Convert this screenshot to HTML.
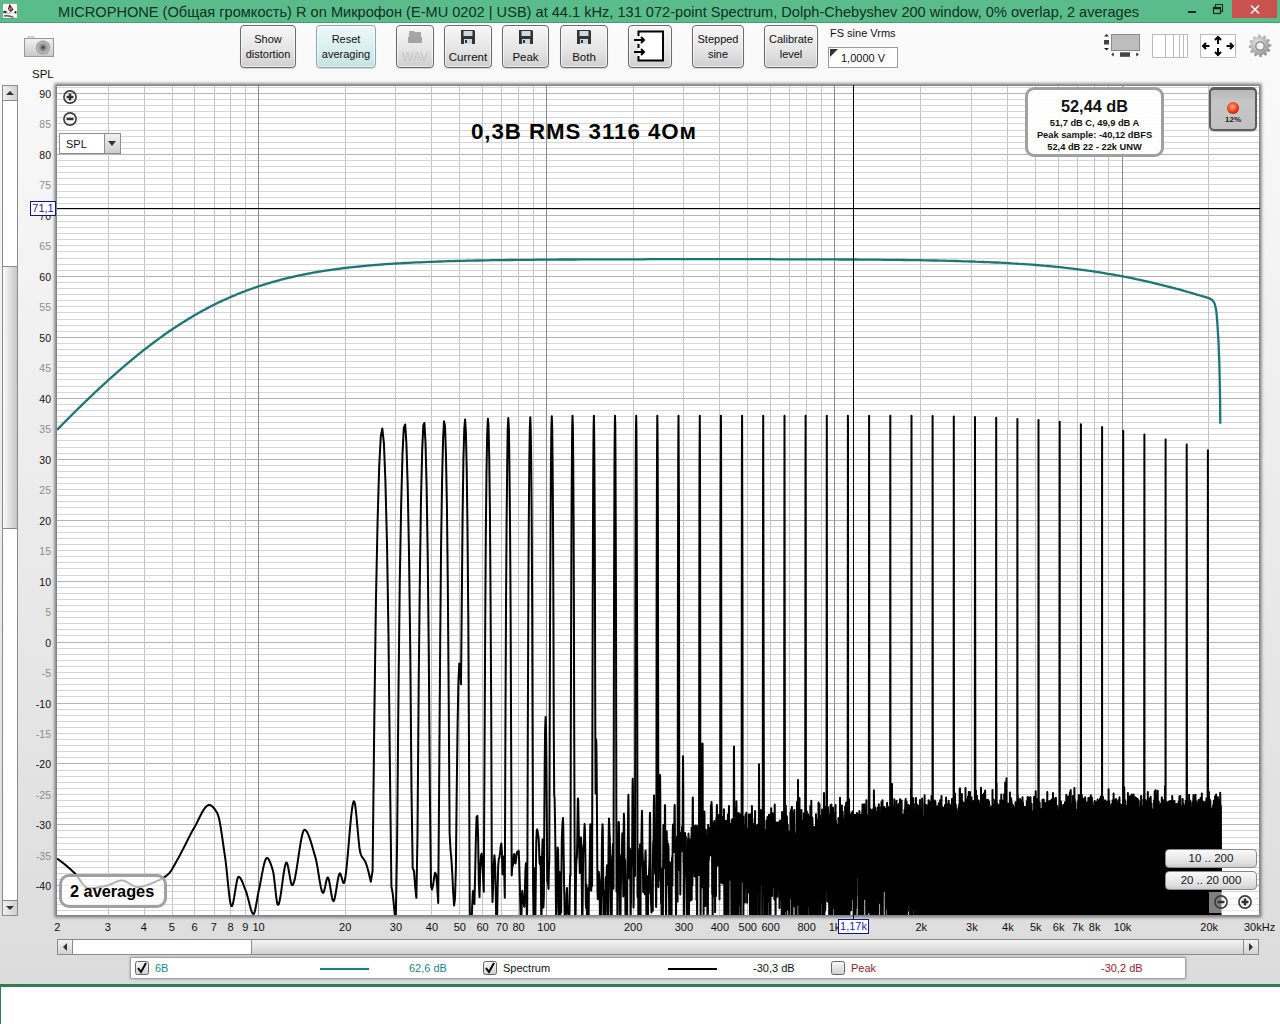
<!DOCTYPE html><html><head><meta charset="utf-8"><style>
*{margin:0;padding:0;box-sizing:border-box}
html,body{width:1280px;height:1024px;overflow:hidden;background:#fff;font-family:"Liberation Sans",sans-serif;}
.abs{position:absolute}
#win{position:absolute;left:0;top:0;width:1280px;height:987px;background:linear-gradient(#fbfbfb 22px,#f5f5f5 200px,#dcdcdc 984px);}
#title{position:absolute;left:0;top:0;width:1280px;height:23px;background:#5bbc8b;}
#title .t{position:absolute;left:58px;top:4px;font-size:14.6px;color:#10301f;white-space:nowrap;letter-spacing:0px}
.btn{position:absolute;top:25px;height:43px;border:1px solid #6a6a6a;border-radius:4px;background:linear-gradient(#f7f7f7,#e4e4e4 60%,#cfcfcf);box-shadow:inset 0 0 0 1px rgba(255,255,255,.6),0 1px 1px rgba(0,0,0,.15);font-size:11px;color:#111;text-align:center;line-height:15px}
.btn.dis{color:#c4c4c4}
.yl{position:absolute;right:1229px;font-size:10.5px;line-height:12px;text-align:right;white-space:nowrap}
.xl{position:absolute;top:921px;font-size:11px;line-height:12px;white-space:nowrap;color:#111}
</style></head><body><div id="win"><div id="title"><svg class="abs" style="left:0;top:0" width="22" height="22" viewBox="0 0 22 22"><rect x="2.5" y="3.3" width="15" height="15" fill="#f4f6f8" stroke="#2f6a4a" stroke-width=".4"/><path d="M9.5 4 L13.5 9.5 L10.5 12 L8 9Z" fill="#2a1a1a"/><circle cx="10.6" cy="8.8" r="1.8" fill="#e05050"/><ellipse cx="5" cy="12" rx="2" ry="1.3" fill="#333a44"/><ellipse cx="15.5" cy="12.3" rx="1" ry="1.2" fill="#222"/><path d="M4 16 Q9 15 13.5 17.5" stroke="#555" stroke-width="1.4" fill="none"/><path d="M6 13 Q9 14 12 12" stroke="#bbb" stroke-width="1.5" fill="none"/></svg><div class="t">MICROPHONE (Общая громкость) R on Микрофон (E-MU 0202 | USB) at 44.1 kHz, 131 072-point Spectrum, Dolph-Chebyshev 200 window, 0% overlap, 2 averages</div><div class="abs" style="left:1188px;top:11px;width:8px;height:2px;background:#0d2a1a"></div><svg class="abs" style="left:1212px;top:3px" width="12" height="12"><rect x="1.5" y="4.5" width="7" height="6" fill="none" stroke="#0d2a1a" stroke-width="1.2"/><path d="M1.5 5.5 H8.5" stroke="#0d2a1a" stroke-width="1.5"/><path d="M3.5 4 V1.5 H10.5 V8.5 H9" fill="none" stroke="#0d2a1a" stroke-width="1.1"/></svg><div class="abs" style="left:1232px;top:0;width:45px;height:18px;background:#c9514f"></div><svg class="abs" style="left:1250px;top:5px" width="10" height="9"><path d="M1 0.5 L9 8.5 M9 0.5 L1 8.5" stroke="#fff" stroke-width="1.5"/></svg><div class="abs" style="left:0;top:22px;width:1280px;height:1px;background:#4f9a72"></div></div><div class="btn" style="left:240px;width:56px;"><div style="padding-top:6px">Show<br>distortion</div></div><div class="btn" style="left:316px;width:60px;background:linear-gradient(#eef8f8,#d8eeee 60%,#c6e2e2);border-color:#8aa"><div style="padding-top:6px">Reset<br>averaging</div></div><div class="btn dis" style="left:396px;width:38px;"><svg width="16" height="14" viewBox="0 0 16 14" style="display:block;margin:4px auto 0"><path d="M2 1 H7 L8 2 H14 V7 H2Z" fill="#a8a8a8"/><path d="M1 7 H15 V12 Q15 13 14 13 H2 Q1 13 1 12Z" fill="#a4a4a4"/></svg><div style="padding-top:6px;font-size:12px">WAV</div></div><div class="btn" style="left:444px;width:48px;"><svg width="16" height="16" viewBox="0 0 16 16" style="display:block;margin:3px auto 0"><path d="M1 1 H14 L15 2 V15 H1Z" fill="#333"/><rect x="3.5" y="2" width="9" height="5" fill="#cfd8e0"/><rect x="4" y="10" width="8" height="5" fill="#cfd8e0"/><rect x="5" y="11" width="2" height="3" fill="#333"/></svg><div style="padding-top:5px;font-size:11.5px">Current</div></div><div class="btn" style="left:502px;width:47px;"><svg width="16" height="16" viewBox="0 0 16 16" style="display:block;margin:3px auto 0"><path d="M1 1 H14 L15 2 V15 H1Z" fill="#333"/><rect x="3.5" y="2" width="9" height="5" fill="#cfd8e0"/><rect x="4" y="10" width="8" height="5" fill="#cfd8e0"/><rect x="5" y="11" width="2" height="3" fill="#333"/></svg><div style="padding-top:5px;font-size:11.5px">Peak</div></div><div class="btn" style="left:560px;width:48px;"><svg width="16" height="16" viewBox="0 0 16 16" style="display:block;margin:3px auto 0"><path d="M1 1 H14 L15 2 V15 H1Z" fill="#333"/><rect x="3.5" y="2" width="9" height="5" fill="#cfd8e0"/><rect x="4" y="10" width="8" height="5" fill="#cfd8e0"/><rect x="5" y="11" width="2" height="3" fill="#333"/></svg><div style="padding-top:5px;font-size:11.5px">Both</div></div><div class="btn" style="left:628px;width:44px;"><svg width="42" height="41" viewBox="0 0 42 41" style="position:absolute;left:0;top:0"><rect x="9.5" y="5.5" width="24.5" height="29" fill="#fff"/><path d="M9.5 10 V5.5 H34 V34.5 H9.5 V30 M9.5 18 V22" fill="none" stroke="#000" stroke-width="2"/><path d="M5 14 H15 M12 11 L15 14 L12 17 M5 26 H15 M12 23 L15 26 L12 29" stroke="#000" stroke-width="2" fill="none"/></svg></div><div class="btn" style="left:692px;width:52px;"><div style="padding-top:6px">Stepped<br>sine</div></div><div class="btn" style="left:764px;width:54px;"><div style="padding-top:6px">Calibrate<br>level</div></div><div class="abs" style="left:830px;top:27px;font-size:11px;color:#111">FS sine Vrms</div><div class="abs" style="left:828px;top:47px;width:70px;height:21px;background:#fff;border:1px solid #9a9a9a;font-size:11px;line-height:21px;padding-left:12px;color:#111">1,0000 V</div><div class="abs" style="left:830px;top:49px;width:0;height:0;border-top:8px solid #333;border-right:8px solid transparent"></div><svg class="abs" style="left:1100px;top:30px" width="42" height="30" viewBox="0 0 42 30">
<rect x="11.5" y="4.5" width="28" height="16" fill="#bdbdbd" stroke="#8a8a8a"/>
<path d="M4 6.5 L6.5 4 L9 6.5Z M4 18 L6.5 20.5 L9 18Z" fill="#222"/>
<rect x="4" y="10" width="5" height="4.5" fill="#444"/>
<path d="M13.7 22.5 L11.2 24.5 L13.7 26.5Z M36.3 22.5 L38.8 24.5 L36.3 26.5Z" fill="#222"/>
<rect x="20" y="22.3" width="10" height="4.5" fill="#444"/>
</svg><svg class="abs" style="left:1152px;top:34px" width="37" height="24" viewBox="0 0 37 24">
<rect x="0.5" y="0.5" width="35" height="23" fill="#fff" stroke="#bbb"/>
<path d="M13.5 0 V24 M21.5 0 V24 M27.5 0 V24 M31.5 0 V24" stroke="#bbb"/>
</svg><svg class="abs" style="left:1200px;top:34px" width="37" height="24" viewBox="0 0 37 24">
<rect x="0.5" y="0.5" width="35" height="23" fill="#fff" stroke="#bbb"/>
<path d="M18 3 V10 M18 14 V21 M3 12 H9.5 M26.5 12 H33" stroke="#000" stroke-width="2"/>
<path d="M15 6 L18 3 L21 6 M15 18 L18 21 L21 18 M6 9 L3 12 L6 15 M30 9 L33 12 L30 15" stroke="#000" stroke-width="2" fill="none"/>
</svg><svg class="abs" style="left:1248px;top:34px" width="24" height="24" viewBox="0 0 24 24">
<defs><radialGradient id="gg" cx="40%" cy="35%" r="70%"><stop offset="0" stop-color="#e8e8e8"/><stop offset="1" stop-color="#8a8a8a"/></radialGradient></defs>
<polygon points="22.91,10.57 23.00,12.01 20.53,13.13 20.30,14.23 22.16,16.22 21.52,17.51 18.82,17.24 18.08,18.09 18.69,20.73 17.49,21.53 15.28,19.95 14.22,20.31 13.43,22.91 11.99,23.00 10.87,20.53 9.77,20.30 7.78,22.16 6.49,21.52 6.76,18.82 5.91,18.08 3.27,18.69 2.47,17.49 4.05,15.28 3.69,14.22 1.09,13.43 1.00,11.99 3.47,10.87 3.70,9.77 1.84,7.78 2.48,6.49 5.18,6.76 5.92,5.91 5.31,3.27 6.51,2.47 8.72,4.05 9.78,3.69 10.57,1.09 12.01,1.00 13.13,3.47 14.23,3.70 16.22,1.84 17.51,2.48 17.24,5.18 18.09,5.92 20.73,5.31 21.53,6.51 19.95,8.72 20.31,9.78" fill="url(#gg)" stroke="#9a9a9a" stroke-width="0.5"/>
<circle cx="12" cy="12" r="4.2" fill="#f4f4f4" stroke="#888" stroke-width="1.2"/>
</svg><svg class="abs" style="left:24px;top:36px" width="30" height="21" viewBox="0 0 30 21">
<defs><linearGradient id="cg" x1="0" y1="0" x2="0" y2="1"><stop offset="0" stop-color="#f2f2f2"/><stop offset="1" stop-color="#c8c8c8"/></linearGradient>
<radialGradient id="lg" cx="50%" cy="50%" r="50%"><stop offset="0" stop-color="#333"/><stop offset=".35" stop-color="#888"/><stop offset=".8" stop-color="#bbb"/><stop offset="1" stop-color="#888"/></radialGradient></defs>
<rect x="4" y="0.5" width="6" height="2" fill="#ddd" stroke="#aaa" stroke-width=".5"/>
<rect x="0.5" y="2.5" width="29" height="18" fill="url(#cg)" stroke="#999"/>
<circle cx="19" cy="11.5" r="7" fill="url(#lg)"/>
</svg><div class="abs" style="left:32px;top:68px;font-size:11.5px;color:#111">SPL</div><div class="abs" style="left:2px;top:85px;width:16px;height:831px;background:#fff;border:1px solid #8a8a8a"></div><div class="abs" style="left:2px;top:85px;width:16px;height:16px;background:linear-gradient(90deg,#f0f0f0,#d0d0d0);border:1px solid #8a8a8a"></div><div class="abs" style="left:6px;top:91px;width:0;height:0;border-left:4px solid transparent;border-right:4px solid transparent;border-bottom:4px solid #333"></div><div class="abs" style="left:2px;top:900px;width:16px;height:16px;background:linear-gradient(90deg,#f0f0f0,#d0d0d0);border:1px solid #8a8a8a"></div><div class="abs" style="left:6px;top:906px;width:0;height:0;border-left:4px solid transparent;border-right:4px solid transparent;border-top:4px solid #333"></div><div class="abs" style="left:2px;top:266px;width:16px;height:263px;background:linear-gradient(90deg,#fafafa,#c6c6c6);border:1px solid #8a8a8a"></div><div class="yl" style="top:88px;color:#111">90</div><div class="yl" style="top:118px;color:#8c8c8c">85</div><div class="yl" style="top:149px;color:#111">80</div><div class="yl" style="top:179px;color:#8c8c8c">75</div><div class="yl" style="top:210px;color:#111">70</div><div class="yl" style="top:240px;color:#8c8c8c">65</div><div class="yl" style="top:271px;color:#111">60</div><div class="yl" style="top:301px;color:#8c8c8c">55</div><div class="yl" style="top:332px;color:#111">50</div><div class="yl" style="top:362px;color:#8c8c8c">45</div><div class="yl" style="top:393px;color:#111">40</div><div class="yl" style="top:423px;color:#8c8c8c">35</div><div class="yl" style="top:454px;color:#111">30</div><div class="yl" style="top:484px;color:#8c8c8c">25</div><div class="yl" style="top:515px;color:#111">20</div><div class="yl" style="top:545px;color:#8c8c8c">15</div><div class="yl" style="top:576px;color:#111">10</div><div class="yl" style="top:606px;color:#8c8c8c">5</div><div class="yl" style="top:637px;color:#111">0</div><div class="yl" style="top:667px;color:#8c8c8c">-5</div><div class="yl" style="top:698px;color:#111">-10</div><div class="yl" style="top:728px;color:#8c8c8c">-15</div><div class="yl" style="top:758px;color:#111">-20</div><div class="yl" style="top:789px;color:#8c8c8c">-25</div><div class="yl" style="top:819px;color:#111">-30</div><div class="yl" style="top:850px;color:#8c8c8c">-35</div><div class="yl" style="top:880px;color:#111">-40</div><div class="xl" style="left:7.2px;width:100px;text-align:center">2</div><div class="xl" style="left:57.9px;width:100px;text-align:center">3</div><div class="xl" style="left:93.9px;width:100px;text-align:center">4</div><div class="xl" style="left:121.8px;width:100px;text-align:center">5</div><div class="xl" style="left:144.6px;width:100px;text-align:center">6</div><div class="xl" style="left:163.9px;width:100px;text-align:center">7</div><div class="xl" style="left:180.6px;width:100px;text-align:center">8</div><div class="xl" style="left:195.3px;width:100px;text-align:center">9</div><div class="xl" style="left:208.5px;width:100px;text-align:center">10</div><div class="xl" style="left:295.2px;width:100px;text-align:center">20</div><div class="xl" style="left:345.9px;width:100px;text-align:center">30</div><div class="xl" style="left:381.9px;width:100px;text-align:center">40</div><div class="xl" style="left:409.8px;width:100px;text-align:center">50</div><div class="xl" style="left:432.6px;width:100px;text-align:center">60</div><div class="xl" style="left:451.9px;width:100px;text-align:center">70</div><div class="xl" style="left:468.6px;width:100px;text-align:center">80</div><div class="xl" style="left:496.5px;width:100px;text-align:center">100</div><div class="xl" style="left:583.2px;width:100px;text-align:center">200</div><div class="xl" style="left:633.9px;width:100px;text-align:center">300</div><div class="xl" style="left:669.9px;width:100px;text-align:center">400</div><div class="xl" style="left:697.8px;width:100px;text-align:center">500</div><div class="xl" style="left:720.6px;width:100px;text-align:center">600</div><div class="xl" style="left:756.6px;width:100px;text-align:center">800</div><div class="xl" style="left:784.5px;width:100px;text-align:center">1k</div><div class="xl" style="left:871.2px;width:100px;text-align:center">2k</div><div class="xl" style="left:921.9px;width:100px;text-align:center">3k</div><div class="xl" style="left:957.9px;width:100px;text-align:center">4k</div><div class="xl" style="left:985.8px;width:100px;text-align:center">5k</div><div class="xl" style="left:1008.6px;width:100px;text-align:center">6k</div><div class="xl" style="left:1027.9px;width:100px;text-align:center">7k</div><div class="xl" style="left:1044.6px;width:100px;text-align:center">8k</div><div class="xl" style="left:1072.5px;width:100px;text-align:center">10k</div><div class="xl" style="left:1159.2px;width:100px;text-align:center">20k</div><div class="xl" style="left:1244px">30kHz</div></div><svg class="abs" style="left:0;top:0" width="1280" height="1024" viewBox="0 0 1280 1024"><defs><filter id="sh" x="-5%" y="-5%" width="110%" height="110%"><feGaussianBlur stdDeviation="1.6"/></filter><clipPath id="pc"><rect x="57" y="86" width="1202" height="829"/></clipPath></defs><rect x="54.5" y="83.5" width="1207" height="834" fill="#7a7a7a" filter="url(#sh)"/><rect x="57" y="86" width="1202" height="829" fill="#fff"/><path d="M57 87.5H1259" stroke="#d6d6d6"/><path d="M57 93.5H1259" stroke="#b4b4b4"/><path d="M57 99.5H1259" stroke="#d6d6d6"/><path d="M57 105.5H1259" stroke="#d6d6d6"/><path d="M57 111.5H1259" stroke="#d6d6d6"/><path d="M57 117.5H1259" stroke="#d6d6d6"/><path d="M57 123.5H1259" stroke="#d6d6d6"/><path d="M57 130.5H1259" stroke="#d6d6d6"/><path d="M57 136.5H1259" stroke="#d6d6d6"/><path d="M57 142.5H1259" stroke="#d6d6d6"/><path d="M57 148.5H1259" stroke="#d6d6d6"/><path d="M57 154.5H1259" stroke="#b4b4b4"/><path d="M57 160.5H1259" stroke="#d6d6d6"/><path d="M57 166.5H1259" stroke="#d6d6d6"/><path d="M57 172.5H1259" stroke="#d6d6d6"/><path d="M57 178.5H1259" stroke="#d6d6d6"/><path d="M57 184.5H1259" stroke="#d6d6d6"/><path d="M57 191.5H1259" stroke="#d6d6d6"/><path d="M57 197.5H1259" stroke="#d6d6d6"/><path d="M57 203.5H1259" stroke="#d6d6d6"/><path d="M57 209.5H1259" stroke="#d6d6d6"/><path d="M57 215.5H1259" stroke="#b4b4b4"/><path d="M57 221.5H1259" stroke="#d6d6d6"/><path d="M57 227.5H1259" stroke="#d6d6d6"/><path d="M57 233.5H1259" stroke="#d6d6d6"/><path d="M57 239.5H1259" stroke="#d6d6d6"/><path d="M57 245.5H1259" stroke="#d6d6d6"/><path d="M57 251.5H1259" stroke="#d6d6d6"/><path d="M57 258.5H1259" stroke="#d6d6d6"/><path d="M57 264.5H1259" stroke="#d6d6d6"/><path d="M57 270.5H1259" stroke="#d6d6d6"/><path d="M57 276.5H1259" stroke="#b4b4b4"/><path d="M57 282.5H1259" stroke="#d6d6d6"/><path d="M57 288.5H1259" stroke="#d6d6d6"/><path d="M57 294.5H1259" stroke="#d6d6d6"/><path d="M57 300.5H1259" stroke="#d6d6d6"/><path d="M57 306.5H1259" stroke="#d6d6d6"/><path d="M57 312.5H1259" stroke="#d6d6d6"/><path d="M57 319.5H1259" stroke="#d6d6d6"/><path d="M57 325.5H1259" stroke="#d6d6d6"/><path d="M57 331.5H1259" stroke="#d6d6d6"/><path d="M57 337.5H1259" stroke="#b4b4b4"/><path d="M57 343.5H1259" stroke="#d6d6d6"/><path d="M57 349.5H1259" stroke="#d6d6d6"/><path d="M57 355.5H1259" stroke="#d6d6d6"/><path d="M57 361.5H1259" stroke="#d6d6d6"/><path d="M57 367.5H1259" stroke="#d6d6d6"/><path d="M57 373.5H1259" stroke="#d6d6d6"/><path d="M57 379.5H1259" stroke="#d6d6d6"/><path d="M57 386.5H1259" stroke="#d6d6d6"/><path d="M57 392.5H1259" stroke="#d6d6d6"/><path d="M57 398.5H1259" stroke="#b4b4b4"/><path d="M57 404.5H1259" stroke="#d6d6d6"/><path d="M57 410.5H1259" stroke="#d6d6d6"/><path d="M57 416.5H1259" stroke="#d6d6d6"/><path d="M57 422.5H1259" stroke="#d6d6d6"/><path d="M57 428.5H1259" stroke="#d6d6d6"/><path d="M57 434.5H1259" stroke="#d6d6d6"/><path d="M57 440.5H1259" stroke="#d6d6d6"/><path d="M57 447.5H1259" stroke="#d6d6d6"/><path d="M57 453.5H1259" stroke="#d6d6d6"/><path d="M57 459.5H1259" stroke="#b4b4b4"/><path d="M57 465.5H1259" stroke="#d6d6d6"/><path d="M57 471.5H1259" stroke="#d6d6d6"/><path d="M57 477.5H1259" stroke="#d6d6d6"/><path d="M57 483.5H1259" stroke="#d6d6d6"/><path d="M57 489.5H1259" stroke="#d6d6d6"/><path d="M57 495.5H1259" stroke="#d6d6d6"/><path d="M57 501.5H1259" stroke="#d6d6d6"/><path d="M57 507.5H1259" stroke="#d6d6d6"/><path d="M57 514.5H1259" stroke="#d6d6d6"/><path d="M57 520.5H1259" stroke="#b4b4b4"/><path d="M57 526.5H1259" stroke="#d6d6d6"/><path d="M57 532.5H1259" stroke="#d6d6d6"/><path d="M57 538.5H1259" stroke="#d6d6d6"/><path d="M57 544.5H1259" stroke="#d6d6d6"/><path d="M57 550.5H1259" stroke="#d6d6d6"/><path d="M57 556.5H1259" stroke="#d6d6d6"/><path d="M57 562.5H1259" stroke="#d6d6d6"/><path d="M57 568.5H1259" stroke="#d6d6d6"/><path d="M57 575.5H1259" stroke="#d6d6d6"/><path d="M57 581.5H1259" stroke="#b4b4b4"/><path d="M57 587.5H1259" stroke="#d6d6d6"/><path d="M57 593.5H1259" stroke="#d6d6d6"/><path d="M57 599.5H1259" stroke="#d6d6d6"/><path d="M57 605.5H1259" stroke="#d6d6d6"/><path d="M57 611.5H1259" stroke="#d6d6d6"/><path d="M57 617.5H1259" stroke="#d6d6d6"/><path d="M57 623.5H1259" stroke="#d6d6d6"/><path d="M57 629.5H1259" stroke="#d6d6d6"/><path d="M57 635.5H1259" stroke="#d6d6d6"/><path d="M57 642.5H1259" stroke="#b4b4b4"/><path d="M57 648.5H1259" stroke="#d6d6d6"/><path d="M57 654.5H1259" stroke="#d6d6d6"/><path d="M57 660.5H1259" stroke="#d6d6d6"/><path d="M57 666.5H1259" stroke="#d6d6d6"/><path d="M57 672.5H1259" stroke="#d6d6d6"/><path d="M57 678.5H1259" stroke="#d6d6d6"/><path d="M57 684.5H1259" stroke="#d6d6d6"/><path d="M57 690.5H1259" stroke="#d6d6d6"/><path d="M57 696.5H1259" stroke="#d6d6d6"/><path d="M57 703.5H1259" stroke="#b4b4b4"/><path d="M57 709.5H1259" stroke="#d6d6d6"/><path d="M57 715.5H1259" stroke="#d6d6d6"/><path d="M57 721.5H1259" stroke="#d6d6d6"/><path d="M57 727.5H1259" stroke="#d6d6d6"/><path d="M57 733.5H1259" stroke="#d6d6d6"/><path d="M57 739.5H1259" stroke="#d6d6d6"/><path d="M57 745.5H1259" stroke="#d6d6d6"/><path d="M57 751.5H1259" stroke="#d6d6d6"/><path d="M57 757.5H1259" stroke="#d6d6d6"/><path d="M57 763.5H1259" stroke="#b4b4b4"/><path d="M57 770.5H1259" stroke="#d6d6d6"/><path d="M57 776.5H1259" stroke="#d6d6d6"/><path d="M57 782.5H1259" stroke="#d6d6d6"/><path d="M57 788.5H1259" stroke="#d6d6d6"/><path d="M57 794.5H1259" stroke="#d6d6d6"/><path d="M57 800.5H1259" stroke="#d6d6d6"/><path d="M57 806.5H1259" stroke="#d6d6d6"/><path d="M57 812.5H1259" stroke="#d6d6d6"/><path d="M57 818.5H1259" stroke="#d6d6d6"/><path d="M57 824.5H1259" stroke="#b4b4b4"/><path d="M57 830.5H1259" stroke="#d6d6d6"/><path d="M57 837.5H1259" stroke="#d6d6d6"/><path d="M57 843.5H1259" stroke="#d6d6d6"/><path d="M57 849.5H1259" stroke="#d6d6d6"/><path d="M57 855.5H1259" stroke="#d6d6d6"/><path d="M57 861.5H1259" stroke="#d6d6d6"/><path d="M57 867.5H1259" stroke="#d6d6d6"/><path d="M57 873.5H1259" stroke="#d6d6d6"/><path d="M57 879.5H1259" stroke="#d6d6d6"/><path d="M57 885.5H1259" stroke="#b4b4b4"/><path d="M57 891.5H1259" stroke="#d6d6d6"/><path d="M57 898.5H1259" stroke="#d6d6d6"/><path d="M57 904.5H1259" stroke="#d6d6d6"/><path d="M57 910.5H1259" stroke="#d6d6d6"/><path d="M108.5 86V915" stroke="#c4c4c4"/><path d="M144.5 86V915" stroke="#c4c4c4"/><path d="M172.5 86V915" stroke="#c4c4c4"/><path d="M194.5 86V915" stroke="#c4c4c4"/><path d="M214.5 86V915" stroke="#c4c4c4"/><path d="M230.5 86V915" stroke="#c4c4c4"/><path d="M245.5 86V915" stroke="#c4c4c4"/><path d="M258.5 86V915" stroke="#8c8c8c"/><path d="M345.5 86V915" stroke="#c4c4c4"/><path d="M395.5 86V915" stroke="#c4c4c4"/><path d="M431.5 86V915" stroke="#c4c4c4"/><path d="M459.5 86V915" stroke="#c4c4c4"/><path d="M482.5 86V915" stroke="#c4c4c4"/><path d="M501.5 86V915" stroke="#c4c4c4"/><path d="M518.5 86V915" stroke="#c4c4c4"/><path d="M533.5 86V915" stroke="#c4c4c4"/><path d="M546.5 86V915" stroke="#8c8c8c"/><path d="M633.5 86V915" stroke="#c4c4c4"/><path d="M683.5 86V915" stroke="#c4c4c4"/><path d="M719.5 86V915" stroke="#c4c4c4"/><path d="M747.5 86V915" stroke="#c4c4c4"/><path d="M770.5 86V915" stroke="#c4c4c4"/><path d="M789.5 86V915" stroke="#c4c4c4"/><path d="M806.5 86V915" stroke="#c4c4c4"/><path d="M821.5 86V915" stroke="#c4c4c4"/><path d="M834.5 86V915" stroke="#8c8c8c"/><path d="M920.5 86V915" stroke="#c4c4c4"/><path d="M971.5 86V915" stroke="#c4c4c4"/><path d="M1007.5 86V915" stroke="#c4c4c4"/><path d="M1035.5 86V915" stroke="#c4c4c4"/><path d="M1058.5 86V915" stroke="#c4c4c4"/><path d="M1077.5 86V915" stroke="#c4c4c4"/><path d="M1094.5 86V915" stroke="#c4c4c4"/><path d="M1108.5 86V915" stroke="#c4c4c4"/><path d="M1122.5 86V915" stroke="#8c8c8c"/><path d="M1208.5 86V915" stroke="#c4c4c4"/><g clip-path="url(#pc)"><path d="M57.0 858.5 L57.7 859.0 L58.4 859.5 L59.1 860.0 L59.8 860.5 L60.5 861.0 L61.2 861.6 L61.9 862.1 L62.6 862.6 L63.3 863.2 L64.0 863.7 L64.7 864.3 L65.4 864.9 L66.1 865.5 L66.8 866.1 L67.5 866.7 L68.2 867.3 L68.9 867.9 L69.6 868.5 L70.3 869.1 L71.0 869.7 L71.7 870.4 L72.4 871.0 L73.1 871.7 L73.8 872.3 L74.5 873.0 L75.2 873.7 L75.9 874.5 L76.6 875.4 L77.3 876.3 L78.0 877.3 L78.7 878.3 L79.4 879.3 L80.1 880.4 L80.8 881.4 L81.5 882.4 L82.2 883.3 L82.9 884.2 L83.6 885.1 L84.3 885.9 L85.0 886.6 L85.7 887.1 L86.4 887.6 L87.1 888.0 L87.8 888.2 L88.5 888.3 L89.2 888.3 L89.9 888.3 L90.6 888.2 L91.3 888.2 L92.0 888.2 L92.7 888.1 L93.4 888.0 L94.1 888.0 L94.8 887.9 L95.5 887.8 L96.2 887.7 L96.9 887.6 L97.6 887.5 L98.3 887.3 L99.0 887.2 L99.7 887.1 L100.4 887.0 L101.1 886.8 L101.8 886.7 L102.5 886.5 L103.2 886.4 L103.9 886.3 L104.6 886.1 L105.3 886.0 L106.0 885.8 L106.7 885.7 L107.4 885.5 L108.1 885.3 L108.8 885.1 L109.5 884.8 L110.2 884.5 L110.9 884.3 L111.6 883.9 L112.3 883.6 L113.0 883.3 L113.7 883.0 L114.4 882.7 L115.1 882.3 L115.8 882.0 L116.5 881.8 L117.2 881.5 L117.9 881.2 L118.6 881.0 L119.3 880.8 L120.0 880.7 L120.7 880.6 L121.4 880.5 L122.1 880.5 L122.8 880.6 L123.5 880.7 L124.2 880.9 L124.9 881.1 L125.6 881.4 L126.3 881.7 L127.0 882.1 L127.7 882.5 L128.4 882.9 L129.1 883.3 L129.8 883.8 L130.5 884.2 L131.2 884.7 L131.9 885.1 L132.6 885.5 L133.3 885.8 L134.0 886.2 L134.7 886.4 L135.4 886.7 L136.1 886.9 L136.8 887.0 L137.5 887.0 L138.2 887.0 L138.9 887.0 L139.6 886.9 L140.3 886.8 L141.0 886.7 L141.7 886.6 L142.4 886.5 L143.1 886.3 L143.8 886.1 L144.5 885.9 L145.2 885.7 L145.9 885.5 L146.6 885.3 L147.3 885.1 L148.0 884.8 L148.7 884.5 L149.4 884.3 L150.1 884.0 L150.8 883.7 L151.5 883.4 L152.2 883.1 L152.9 882.8 L153.6 882.5 L154.3 882.2 L155.0 881.9 L155.7 881.6 L156.4 881.3 L157.1 880.9 L157.8 880.6 L158.5 880.3 L159.2 880.0 L159.9 879.7 L160.6 879.3 L161.3 879.0 L162.0 878.6 L162.7 878.2 L163.4 877.8 L164.1 877.3 L164.8 876.9 L165.5 876.4 L166.2 875.8 L166.9 875.3 L167.6 874.7 L168.3 874.1 L169.0 873.4 L169.7 872.6 L170.4 871.7 L171.1 870.7 L171.8 869.7 L172.5 868.5 L173.2 867.3 L173.9 866.1 L174.6 864.8 L175.3 863.5 L176.0 862.2 L176.7 860.9 L177.4 859.6 L178.1 858.4 L178.8 857.1 L179.5 855.9 L180.2 854.6 L180.9 853.3 L181.6 852.0 L182.3 850.6 L183.0 849.3 L183.7 847.9 L184.4 846.5 L185.1 845.1 L185.8 843.7 L186.5 842.3 L187.2 840.9 L187.9 839.5 L188.6 838.1 L189.3 836.7 L190.0 835.4 L190.7 834.0 L191.4 832.7 L192.1 831.4 L192.8 830.1 L193.5 828.9 L194.2 827.7 L194.9 826.5 L195.6 825.2 L196.3 823.9 L197.0 822.5 L197.7 821.1 L198.4 819.7 L199.1 818.3 L199.8 816.9 L200.5 815.5 L201.2 814.1 L201.9 812.8 L202.6 811.6 L203.3 810.4 L204.0 809.3 L204.7 808.3 L205.4 807.4 L206.1 806.7 L206.8 806.0 L207.5 805.5 L208.2 805.2 L208.9 805.0 L209.6 805.0 L210.3 805.2 L211.0 805.5 L211.7 806.0 L212.4 806.5 L213.1 807.2 L213.8 808.0 L214.5 808.9 L215.2 809.9 L215.9 811.0 L216.6 812.1 L217.3 813.3 L218.0 814.9 L218.7 817.2 L219.4 820.3 L220.1 823.9 L220.8 828.0 L221.5 832.5 L222.2 837.2 L222.9 842.1 L223.6 847.0 L224.3 851.9 L225.0 856.6 L225.7 861.7 L226.4 867.8 L227.1 874.6 L227.8 881.6 L228.5 888.5 L229.2 894.8 L229.9 900.1 L230.6 904.0 L231.3 906.1 L232.0 906.0 L232.7 904.3 L233.4 901.4 L234.1 897.7 L234.8 893.4 L235.5 889.0 L236.2 884.8 L236.9 881.1 L237.6 878.3 L238.3 876.9 L239.0 876.8 L239.7 877.3 L240.4 878.1 L241.1 879.3 L241.8 880.7 L242.5 882.4 L243.2 884.2 L243.9 886.0 L244.6 887.9 L245.3 889.7 L246.0 891.4 L246.7 893.4 L247.4 895.9 L248.1 898.5 L248.8 901.3 L249.5 904.1 L250.2 906.8 L250.9 909.3 L251.6 911.3 L252.3 912.9 L253.0 913.8 L253.7 913.9 L254.4 912.7 L255.1 910.2 L255.8 906.8 L256.5 902.9 L257.2 898.8 L257.9 894.8 L258.6 891.3 L259.3 888.2 L260.0 884.8 L260.7 881.1 L261.4 877.4 L262.1 873.6 L262.8 870.1 L263.5 866.7 L264.2 863.7 L264.9 861.3 L265.6 859.4 L266.3 858.2 L267.0 857.9 L267.7 858.2 L268.4 859.0 L269.1 860.1 L269.8 861.6 L270.5 863.3 L271.2 865.2 L271.9 867.4 L272.6 869.6 L273.3 872.4 L274.0 877.2 L274.7 883.2 L275.4 889.7 L276.1 895.9 L276.8 901.0 L277.5 904.2 L278.2 904.9 L278.9 903.7 L279.6 901.0 L280.3 897.3 L281.0 892.9 L281.7 887.9 L282.4 882.6 L283.1 877.5 L283.8 872.6 L284.5 868.5 L285.2 865.2 L285.9 863.1 L286.6 862.5 L287.3 863.7 L288.0 866.4 L288.7 870.0 L289.4 874.1 L290.1 878.2 L290.8 881.8 L291.5 884.3 L292.2 885.2 L292.9 884.7 L293.6 883.2 L294.3 880.9 L295.0 877.9 L295.7 874.3 L296.4 870.2 L297.1 865.8 L297.8 861.2 L298.5 856.5 L299.2 851.8 L299.9 847.2 L300.6 843.0 L301.3 839.1 L302.0 835.7 L302.7 833.0 L303.4 831.0 L304.1 830.0 L304.8 829.8 L305.5 830.2 L306.2 830.9 L306.9 831.8 L307.6 833.1 L308.3 834.6 L309.0 836.4 L309.7 838.3 L310.4 840.4 L311.1 842.6 L311.8 844.9 L312.5 847.3 L313.2 849.7 L313.9 852.2 L314.6 854.6 L315.3 857.0 L316.0 859.6 L316.7 863.0 L317.4 866.9 L318.1 871.1 L318.8 875.5 L319.5 879.8 L320.2 883.8 L320.9 887.3 L321.6 890.2 L322.3 892.1 L323.0 892.9 L323.7 892.2 L324.4 890.0 L325.1 886.9 L325.8 883.4 L326.5 880.3 L327.2 878.1 L327.9 877.4 L328.6 878.7 L329.3 881.6 L330.0 885.5 L330.7 889.9 L331.4 894.3 L332.1 897.9 L332.8 900.4 L333.5 901.2 L334.2 900.0 L334.9 897.4 L335.6 893.8 L336.3 889.5 L337.0 885.0 L337.7 880.7 L338.4 877.1 L339.1 874.5 L339.8 873.3 L340.5 874.0 L341.2 876.0 L341.9 878.6 L342.6 881.1 L343.3 882.8 L344.0 882.9 L344.7 880.9 L345.4 877.1 L346.1 871.8 L346.8 865.3 L347.5 857.9 L348.2 849.8 L348.9 841.5 L349.6 833.2 L350.3 825.2 L351.0 817.9 L351.7 811.5 L352.4 806.4 L353.1 802.9 L353.8 801.2 L354.5 801.9 L355.2 805.3 L355.9 810.8 L356.6 817.8 L357.3 825.6 L358.0 833.5 L358.7 841.0 L359.4 847.4 L360.1 851.9 L360.8 854.3 L361.5 855.9 L362.2 857.1 L362.9 858.1 L363.6 859.0 L364.3 860.0 L365.0 861.2 L365.7 862.7 L366.4 864.6 L367.1 866.8 L367.8 869.2 L368.5 871.8 L369.2 874.7 L369.9 877.7 L370.6 880.9 L370.8 881.8 L372.6 870.6 L374.3 720.4 L375.9 603.0 L377.6 520.6 L379.2 466.2 L380.8 436.1 L382.3 428.6 L383.9 443.2 L385.4 480.7 L387.0 543.5 L388.5 636.0 L389.9 766.8 L391.4 886.3 L392.8 894.2 L394.3 909.5 L395.7 925.0 L397.1 843.1 L398.5 690.0 L399.8 580.0 L401.2 503.3 L402.5 453.7 L403.8 427.9 L405.2 424.5 L406.4 443.3 L407.7 485.4 L409.0 553.3 L410.3 652.2 L411.5 791.7 L412.7 868.2 L414.0 871.2 L415.2 886.9 L416.4 897.8 L417.5 834.9 L418.7 682.9 L419.9 574.4 L421.0 498.9 L422.2 450.3 L423.3 425.4 L424.4 423.0 L425.5 442.7 L426.6 485.7 L427.7 554.8 L428.8 655.1 L429.9 795.8 L431.0 886.1 L432.0 889.5 L433.1 885.1 L434.1 877.6 L435.1 872.7 L436.2 874.8 L437.2 886.7 L438.2 903.0 L439.2 778.3 L440.2 641.6 L441.1 545.0 L442.1 478.9 L443.1 438.5 L444.0 421.2 L445.0 426.0 L445.9 453.3 L446.9 504.6 L447.8 583.3 L448.7 695.9 L449.6 833.0 L450.5 849.5 L451.4 859.1 L452.3 874.0 L453.2 892.5 L454.1 905.4 L455.0 898.2 L455.9 867.5 L456.7 792.2 L457.6 725.0 L458.4 682.6 L459.3 663.4 L460.1 666.5 L461.0 684.2 L461.8 600.5 L462.6 516.2 L463.4 460.1 L464.3 428.4 L465.1 419.4 L465.9 432.5 L466.7 468.5 L467.5 529.4 L468.3 619.7 L469.0 747.9 L469.8 922.0 L470.6 924.6 L471.4 925.0 L472.1 908.5 L472.9 891.2 L473.6 891.1 L474.4 904.0 L475.1 875.4 L475.9 837.8 L476.6 816.8 L477.4 815.8 L478.1 836.3 L478.8 882.1 L479.5 897.1 L480.3 867.8 L481.0 855.4 L481.7 853.6 L482.4 862.1 L483.1 877.8 L483.8 891.7 L484.5 760.5 L485.2 628.4 L485.8 535.2 L486.5 471.8 L487.2 433.7 L487.9 418.7 L488.5 425.7 L489.2 455.3 L489.9 509.1 L490.5 590.8 L491.2 707.4 L491.8 868.9 L492.5 902.0 L493.1 885.7 L493.8 865.0 L494.4 855.3 L495.1 863.4 L495.7 889.4 L496.3 925.0 L497.0 925.0 L497.6 889.3 L498.2 865.8 L498.8 858.8 L499.4 857.7 L500.0 853.5 L500.7 846.5 L501.3 843.4 L501.9 852.4 L502.5 874.3 L503.1 867.4 L503.7 856.5 L504.2 870.6 L504.8 897.8 L505.4 732.9 L506.0 608.8 L506.6 521.5 L507.2 463.0 L507.7 429.2 L508.3 418.1 L508.9 429.2 L509.4 463.0 L510.0 521.5 L510.6 608.8 L511.1 732.9 L511.7 875.4 L512.2 867.8 L512.8 865.6 L513.3 862.7 L513.9 854.4 L514.4 854.1 L515.0 861.7 L515.5 863.6 L516.1 859.2 L516.6 854.8 L517.1 852.0 L517.7 853.2 L518.2 851.0 L518.7 850.7 L519.2 862.0 L519.8 883.6 L520.3 905.1 L520.8 925.0 L521.3 925.0 L521.8 897.9 L522.3 890.7 L522.8 897.1 L523.4 901.8 L523.9 904.8 L524.4 906.9 L524.9 891.9 L525.4 870.9 L525.9 863.3 L526.4 878.8 L526.9 925.0 L527.3 898.3 L527.8 732.1 L528.3 608.0 L528.8 520.7 L529.3 462.2 L529.8 428.4 L530.3 417.3 L530.7 428.4 L531.2 462.2 L531.7 520.7 L532.2 608.0 L532.6 732.1 L533.1 889.6 L533.6 923.1 L534.0 883.3 L534.5 868.0 L535.0 878.8 L535.4 916.8 L535.9 870.3 L536.3 840.7 L536.8 830.3 L537.2 829.4 L537.7 831.8 L538.1 834.9 L538.6 837.9 L539.0 845.3 L539.5 862.6 L539.9 864.4 L540.4 857.0 L540.8 871.2 L541.3 925.0 L541.7 908.3 L542.1 855.3 L542.6 839.6 L543.0 850.5 L543.4 907.5 L543.9 896.0 L544.3 822.1 L544.7 764.9 L545.1 729.7 L545.6 717.0 L546.0 726.4 L546.4 758.4 L546.8 814.6 L547.3 880.4 L547.7 881.8 L548.1 883.7 L548.5 888.9 L548.9 870.2 L549.3 859.1 L549.7 731.1 L550.1 607.0 L550.6 519.7 L551.0 461.2 L551.4 427.4 L551.8 416.3 L552.2 427.4 L552.6 461.2 L553.0 519.7 L553.4 607.0 L553.8 729.9 L554.2 794.9 L554.6 798.0 L555.0 818.8 L555.4 847.4 L555.7 881.4 L556.1 920.7 L556.5 907.6 L556.9 879.8 L557.3 856.8 L557.7 847.6 L558.1 850.3 L558.4 868.9 L558.8 921.0 L559.2 885.7 L559.6 871.9 L560.0 908.9 L560.3 920.1 L560.7 887.6 L561.1 912.3 L561.5 868.6 L561.8 839.8 L562.2 829.4 L562.6 822.0 L563.0 818.1 L563.3 828.4 L563.7 857.0 L564.1 885.8 L564.4 898.3 L564.8 925.0 L565.2 925.0 L565.5 909.5 L565.9 915.7 L566.2 915.8 L566.6 895.0 L567.0 887.9 L567.3 898.7 L567.7 912.6 L568.0 907.7 L568.4 907.4 L568.7 925.0 L569.1 925.0 L569.4 918.1 L569.8 887.5 L570.1 875.0 L570.5 875.8 L570.8 730.6 L571.2 606.5 L571.5 519.2 L571.9 460.7 L572.2 426.9 L572.5 415.8 L572.9 426.9 L573.2 460.7 L573.6 519.2 L573.9 606.5 L574.2 730.0 L574.6 838.5 L574.9 870.4 L575.2 925.0 L575.6 920.0 L575.9 884.7 L576.2 865.5 L576.6 858.2 L576.9 857.8 L577.2 843.3 L577.6 814.9 L577.9 798.4 L578.2 800.2 L578.5 817.2 L578.9 836.7 L579.2 848.9 L579.5 860.2 L579.8 873.0 L580.2 869.0 L580.5 849.7 L580.8 837.3 L581.1 838.1 L581.4 853.3 L581.8 886.6 L582.1 925.0 L582.4 925.0 L582.7 899.8 L583.0 866.0 L583.3 848.2 L583.7 844.9 L584.0 842.6 L584.3 830.2 L584.6 824.1 L584.9 829.8 L585.2 844.8 L585.5 867.0 L585.8 900.9 L586.1 908.0 L586.4 884.5 L586.7 888.5 L587.0 922.8 L587.3 925.0 L587.7 896.4 L588.0 888.5 L588.3 925.0 L588.6 920.5 L588.9 891.6 L589.2 890.1 L589.5 877.5 L589.8 857.1 L590.1 835.4 L590.3 824.3 L590.6 829.5 L590.9 853.6 L591.2 890.7 L591.5 881.3 L591.8 882.1 L592.1 885.9 L592.4 730.6 L592.7 606.5 L593.0 519.2 L593.3 460.7 L593.6 426.9 L593.9 415.8 L594.1 426.9 L594.4 460.7 L594.7 519.2 L595.0 606.5 L595.3 730.3 L595.6 793.4 L595.9 755.0 L596.1 739.3 L596.4 745.7 L596.7 773.9 L597.0 820.7 L597.3 867.4 L597.5 890.6 L597.8 899.3 L598.1 890.4 L598.4 877.0 L598.7 871.7 L598.9 873.1 L599.2 876.6 L599.5 881.1 L599.8 905.8 L600.0 925.0 L600.3 921.8 L600.6 925.0 L600.9 921.7 L601.1 899.3 L601.4 893.3 L601.7 868.3 L601.9 846.8 L602.2 832.3 L602.5 824.2 L602.8 829.6 L603.0 854.1 L603.3 896.1 L603.6 925.0 L603.8 925.0 L604.1 892.1 L604.4 890.9 L604.6 920.1 L604.9 925.0 L605.1 925.0 L605.4 900.3 L605.7 880.3 L605.9 876.9 L606.2 895.7 L606.5 896.5 L606.7 871.7 L607.0 865.2 L607.2 879.2 L607.5 917.1 L607.8 925.0 L608.0 925.0 L608.3 888.8 L608.5 850.2 L608.8 825.6 L609.0 818.5 L609.3 825.2 L609.5 832.2 L609.8 838.1 L610.1 853.1 L610.3 878.9 L610.6 909.2 L610.8 925.0 L611.1 918.4 L611.3 904.6 L611.6 925.0 L611.8 908.8 L612.1 864.6 L612.3 855.8 L612.6 855.8 L612.8 846.0 L613.1 843.8 L613.3 860.4 L613.5 888.8 L613.8 730.6 L614.0 606.5 L614.3 519.2 L614.5 460.7 L614.8 426.9 L615.0 415.8 L615.3 426.9 L615.5 460.7 L615.7 519.2 L616.0 606.5 L616.2 730.6 L616.5 891.4 L616.7 858.4 L616.9 842.3 L617.2 853.5 L617.4 921.1 L617.7 883.3 L617.9 851.4 L618.1 845.5 L618.4 835.0 L618.6 822.0 L618.9 822.3 L619.1 835.6 L619.3 855.4 L619.6 879.9 L619.8 911.8 L620.0 925.0 L620.3 925.0 L620.5 920.7 L620.7 896.8 L621.0 879.9 L621.2 864.6 L621.4 855.0 L621.7 856.8 L621.9 857.5 L622.1 842.7 L622.3 833.3 L622.6 837.0 L622.8 849.2 L623.0 867.5 L623.3 896.5 L623.5 866.2 L623.7 828.7 L623.9 813.8 L624.2 820.3 L624.4 852.9 L624.6 884.8 L624.8 859.1 L625.1 861.8 L625.3 891.5 L625.5 925.0 L625.7 925.0 L626.0 911.0 L626.2 889.7 L626.4 882.9 L626.6 888.7 L626.8 925.0 L627.1 924.5 L627.3 878.2 L627.5 863.3 L627.7 850.6 L628.0 826.2 L628.2 802.4 L628.4 794.7 L628.6 807.4 L628.8 838.1 L629.0 867.9 L629.3 878.5 L629.5 872.9 L629.7 858.9 L629.9 848.7 L630.1 850.9 L630.3 876.1 L630.6 925.0 L630.8 906.7 L631.0 902.6 L631.2 867.3 L631.4 851.8 L631.6 857.9 L631.8 865.6 L632.1 855.1 L632.3 822.1 L632.5 790.9 L632.7 778.7 L632.9 787.2 L633.1 813.3 L633.3 847.8 L633.5 907.6 L633.7 900.4 L633.9 860.5 L634.2 851.8 L634.4 856.1 L634.6 865.7 L634.8 873.8 L635.0 876.1 L635.2 730.6 L635.4 606.5 L635.6 519.2 L635.8 460.7 L636.0 426.9 L636.2 415.8 L636.4 426.9 L636.6 460.7 L636.8 519.2 L637.0 606.5 L637.3 730.6 L637.5 896.7 L637.7 862.7 L637.9 848.9 L638.1 862.1 L638.3 912.7 L638.5 925.0 L638.7 910.7 L638.9 875.9 L639.1 863.1 L639.3 871.6 L639.5 912.4 L639.7 919.5 L639.9 857.6 L640.1 844.2 L640.3 866.3 L640.5 925.0 L640.7 865.1 L640.9 852.7 L641.1 864.9 L641.3 854.8 L641.5 834.4 L641.7 825.1 L641.9 813.6 L642.0 810.7 L642.2 825.2 L642.4 845.8 L642.6 852.5 L642.8 858.8 L643.0 873.5 L643.2 892.1 L643.4 891.7 L643.6 889.8 L643.8 889.5 L644.0 884.4 L644.2 872.8 L644.4 861.8 L644.6 867.5 L644.8 894.2 L645.0 876.9 L645.1 864.0 L645.3 856.9 L645.5 850.6 L645.7 854.4 L645.9 867.1 L646.1 884.3 L646.3 903.0 L646.5 924.6 L646.7 911.0 L646.9 880.8 L647.0 876.0 L647.2 896.9 L647.4 907.3 L647.6 908.6 L647.8 922.2 L648.0 913.5 L648.2 889.1 L648.4 881.0 L648.5 889.1 L648.7 893.6 L648.9 881.1 L649.1 869.7 L649.3 865.2 L649.5 859.0 L649.7 838.6 L649.8 818.4 L650.0 812.7 L650.2 824.1 L650.4 846.7 L650.6 864.3 L650.8 882.1 L650.9 901.4 L651.1 903.7 L651.3 907.5 L651.5 912.6 L651.7 903.6 L651.8 885.9 L652.0 884.9 L652.2 901.1 L652.4 909.6 L652.6 908.5 L652.8 910.8 L652.9 873.2 L653.1 847.6 L653.3 841.1 L653.5 849.2 L653.6 836.6 L653.8 806.6 L654.0 795.6 L654.2 805.7 L654.4 831.8 L654.5 852.3 L654.7 856.7 L654.9 863.3 L655.1 872.8 L655.2 873.8 L655.4 865.6 L655.6 863.9 L655.8 875.0 L655.9 887.6 L656.1 907.0 L656.3 900.2 L656.5 730.6 L656.6 606.5 L656.8 519.2 L657.0 460.7 L657.2 426.9 L657.3 415.8 L657.5 426.9 L657.7 460.7 L657.9 519.2 L658.0 606.5 L658.2 730.6 L658.4 887.0 L658.6 863.7 L658.7 851.7 L658.9 859.6 L659.1 868.2 L659.2 861.0 L659.4 849.5 L659.6 828.7 L659.7 795.3 L659.9 775.1 L660.1 775.9 L660.3 798.8 L660.4 844.0 L660.6 881.1 L660.8 877.4 L660.9 887.5 L661.1 903.8 L661.3 887.2 L661.4 888.3 L661.6 921.8 L661.8 925.0 L661.9 925.0 L662.1 925.0 L662.3 879.6 L662.4 868.5 L662.6 894.9 L662.8 925.0 L662.9 915.3 L663.1 867.3 L663.3 839.1 L663.4 826.1 L663.6 824.9 L663.8 832.9 L663.9 844.1 L664.1 846.5 L664.3 849.8 L664.4 868.1 L664.6 866.3 L664.8 827.3 L664.9 805.3 L665.1 805.3 L665.2 827.7 L665.4 863.1 L665.6 867.1 L665.7 877.5 L665.9 907.0 L666.1 925.0 L666.2 913.0 L666.4 859.3 L666.5 836.3 L666.7 831.3 L666.9 842.1 L667.0 869.8 L667.2 856.3 L667.3 840.7 L667.5 850.7 L667.5 851.0 L667.7 884.8 L668.0 853.3 L668.1 846.1 L668.3 844.6 L668.5 847.7 L668.6 859.3 L668.8 881.3 L668.9 894.9 L669.1 898.6 L669.2 918.9 L669.4 925.0 L669.6 925.0 L669.7 925.0 L669.9 925.0 L670.0 870.9 L670.2 862.5 L670.3 896.2 L670.5 896.5 L670.5 896.5 L670.7 863.3 L671.0 878.6 L671.1 890.0 L671.3 906.4 L671.4 925.0 L671.6 915.4 L671.7 884.2 L671.9 862.4 L672.1 857.3 L672.2 870.4 L672.4 885.5 L672.5 859.3 L672.5 859.3 L672.8 829.4 L673.0 824.6 L673.1 829.9 L673.3 834.3 L673.4 840.7 L673.6 848.8 L673.7 847.6 L673.9 842.9 L674.0 845.5 L674.2 852.1 L674.3 832.2 L674.5 808.8 L674.7 804.9 L675.0 847.8 L675.0 847.8 L675.1 851.3 L675.3 843.9 L675.4 843.1 L675.6 851.0 L675.7 870.1 L675.9 896.2 L676.0 920.0 L676.0 920.0 L676.5 859.3 L676.5 860.6 L676.6 848.6 L676.7 845.2 L676.9 841.3 L677.0 838.6 L677.0 836.5 L677.5 894.0 L677.5 894.0 L677.6 901.4 L677.8 730.6 L677.9 606.5 L678.1 519.2 L678.2 460.7 L678.4 426.9 L678.5 415.8 L678.5 415.8 L679.0 519.2 L679.0 519.2 L679.1 606.5 L679.2 730.6 L679.4 870.3 L679.5 866.1 L679.7 868.2 L680.0 866.5 L680.0 853.3 L680.1 861.5 L680.3 894.5 L680.4 884.8 L680.6 852.6 L680.6 852.6 L681.0 850.8 L681.0 834.4 L681.1 832.6 L681.3 840.0 L681.4 851.5 L681.6 850.8 L681.6 850.8 L682.0 837.3 L682.0 831.5 L682.1 826.4 L682.3 828.5 L682.4 835.3 L682.6 836.8 L682.6 836.8 L683.0 756.2 L683.0 756.2 L683.1 763.8 L683.3 794.0 L683.4 842.2 L683.5 861.0 L683.7 866.0 L683.8 925.0 L684.0 925.0 L684.1 916.6 L684.2 915.4 L684.4 900.4 L684.5 891.5 L684.5 891.5 L684.9 855.5 L684.9 838.5 L685.1 833.0 L685.1 848.8 L685.5 865.3 L685.5 865.3 L685.6 846.4 L685.8 836.5 L685.9 841.2 L686.0 857.2 L686.2 875.6 L686.5 863.2 L686.5 855.6 L686.6 849.1 L686.7 858.6 L686.9 887.0 L687.0 919.6 L687.0 919.6 L687.3 898.2 L687.4 891.2 L687.6 902.8 L687.6 902.8 L688.0 840.8 L688.0 844.5 L688.1 838.2 L688.2 840.8 L688.4 846.7 L688.5 851.5 L688.5 833.4 L688.9 925.0 L688.9 925.0 L689.0 901.6 L689.0 901.6 L689.0 844.5 L689.5 839.3 L689.6 843.9 L689.6 859.6 L690.0 873.3 L690.0 873.3 L690.1 872.6 L690.3 864.5 L690.4 869.5 L690.5 894.6 L690.7 900.6 L690.7 874.8 L690.9 894.4 L691.1 884.8 L691.1 884.8 L691.4 835.9 L691.4 853.6 L691.6 892.5 L691.6 827.7 L691.7 899.7 L692.0 839.9 L692.1 834.7 L692.1 851.8 L692.4 885.1 L692.5 855.0 L692.6 815.6 L692.8 797.4 L692.9 800.8 L693.0 824.5 L693.0 823.8 L693.4 846.2 L693.4 846.2 L693.5 847.2 L693.8 848.1 L693.9 848.9 L693.9 835.6 L694.1 825.9 L694.1 842.9 L694.4 870.4 L694.4 870.4 L694.6 876.4 L694.6 876.4 L695.0 850.0 L695.0 853.6 L695.1 854.6 L695.1 846.9 L695.3 870.1 L695.5 866.0 L695.6 853.2 L695.6 853.2 L695.9 825.6 L696.0 826.3 L696.1 845.5 L696.1 847.9 L696.5 899.7 L696.5 899.7 L696.6 857.5 L696.7 836.2 L696.9 844.8 L697.0 886.7 L697.1 921.7 L697.4 861.1 L697.4 847.9 L697.5 827.0 L697.5 827.0 L697.8 832.0 L697.9 825.9 L698.0 842.9 L698.1 846.2 L698.4 841.3 L698.4 841.3 L698.5 853.4 L698.5 855.0 L698.8 875.1 L698.9 865.5 L699.0 846.2 L699.0 846.2 L699.4 519.2 L699.4 519.2 L699.5 460.7 L699.5 460.7 L699.8 415.8 L700.0 460.7 L700.1 519.2 L700.1 519.2 L700.5 891.8 L700.5 891.8 L700.6 925.0 L700.6 925.0 L701.0 823.1 L701.0 827.0 L701.1 815.3 L701.2 815.0 L701.5 822.1 L701.5 822.1 L701.6 841.0 L701.6 848.8 L701.8 887.5 L702.0 880.4 L702.1 852.9 L702.1 852.9 L702.4 743.5 L702.4 743.6 L702.6 743.8 L702.6 743.8 L702.9 883.4 L702.9 883.4 L703.0 885.3 L703.0 885.3 L703.3 831.9 L703.4 832.3 L703.5 859.5 L703.6 925.0 L703.9 841.7 L703.9 853.5 L704.0 827.1 L704.0 827.1 L704.4 811.5 L704.5 816.5 L704.6 861.6 L704.6 861.6 L704.8 846.9 L705.0 834.0 L705.1 842.0 L705.3 905.9 L705.3 853.6 L705.4 892.3 L705.5 841.8 L705.5 841.8 L705.8 835.0 L705.9 829.7 L706.0 842.2 L706.0 842.2 L706.3 836.1 L706.5 841.2 L706.6 853.2 L706.6 843.4 L706.8 896.0 L707.0 884.9 L707.1 845.5 L707.1 851.0 L707.4 920.9 L707.4 920.9 L707.5 879.1 L707.9 914.0 L707.9 839.8 L707.9 914.0 L708.0 886.7 L708.1 825.1 L708.3 887.7 L708.5 848.4 L708.6 835.3 L708.8 849.3 L708.9 859.9 L708.9 859.9 L709.0 854.2 L709.0 854.2 L709.5 835.0 L709.5 847.3 L709.6 854.7 L709.6 854.7 L709.6 827.9 L710.0 852.5 L710.1 853.9 L710.3 850.1 L710.4 855.3 L710.4 855.3 L710.5 851.4 L710.5 851.4 L710.9 805.2 L711.0 811.1 L711.1 810.4 L711.1 826.4 L711.3 838.8 L711.4 818.7 L711.5 802.0 L711.8 808.0 L712.0 828.5 L712.0 828.5 L712.1 862.1 L712.1 863.9 L712.2 894.2 L712.4 875.6 L712.5 880.6 L712.7 925.0 L712.7 849.0 L713.0 855.8 L713.1 853.7 L713.2 853.7 L713.4 835.2 L713.4 836.2 L713.5 822.8 L713.7 828.5 L714.0 877.0 L714.0 877.0 L714.1 896.3 L714.3 821.0 L714.4 896.4 L714.4 896.4 L714.5 883.0 L714.5 883.0 L714.5 848.4 L715.0 868.6 L715.1 912.3 L715.1 912.3 L715.4 846.0 L715.4 848.0 L715.5 837.4 L715.5 841.6 L716.0 896.2 L716.0 896.2 L716.1 852.2 L716.1 852.2 L716.4 817.9 L716.5 829.4 L716.6 829.2 L716.6 829.2 L716.8 808.7 L716.9 805.0 L717.0 815.9 L717.0 826.8 L717.1 839.5 L717.5 816.2 L717.6 826.8 L717.6 837.7 L717.8 865.6 L717.9 863.2 L718.0 841.8 L718.0 841.8 L718.3 823.1 L718.4 821.8 L718.5 836.2 L718.6 847.0 L719.0 821.2 L719.0 823.1 L719.1 823.0 L719.1 814.8 L719.5 899.4 L719.5 899.4 L719.6 867.2 L719.6 867.2 L719.9 825.1 L719.9 814.2 L720.0 823.7 L720.2 841.8 L720.4 606.5 L720.4 606.5 L720.5 519.2 L720.5 519.2 L720.9 415.8 L721.0 426.9 L721.1 460.7 L721.1 460.7 L721.5 882.5 L721.5 882.5 L721.6 866.9 L721.6 866.9 L722.0 824.1 L722.0 832.9 L722.1 825.2 L722.1 817.1 L722.3 883.5 L722.4 871.8 L722.5 829.0 L722.6 822.7 L722.9 871.4 L722.9 871.4 L723.0 874.1 L723.0 874.1 L723.4 857.3 L723.4 845.3 L723.5 848.2 L723.6 851.1 L723.9 826.5 L723.9 809.3 L724.0 810.0 L724.0 827.4 L724.4 916.6 L724.5 862.6 L724.6 829.8 L724.6 829.8 L724.8 831.2 L725.0 825.9 L725.1 826.0 L725.1 837.6 L725.5 897.3 L725.5 897.3 L725.6 881.8 L725.6 881.8 L726.0 830.9 L726.0 820.7 L726.1 834.5 L726.1 838.3 L726.4 925.0 L726.5 883.0 L726.6 877.0 L726.6 866.1 L726.8 925.0 L727.0 850.5 L727.1 831.5 L727.2 835.8 L727.4 909.7 L727.5 858.6 L727.6 860.2 L727.7 900.9 L727.9 814.6 L728.0 832.6 L728.1 845.7 L728.1 831.3 L728.4 925.0 L728.4 925.0 L728.5 903.7 L728.6 925.0 L728.9 825.8 L728.9 808.0 L729.0 806.1 L729.0 821.6 L729.4 868.8 L729.4 868.8 L729.5 859.2 L729.7 865.9 L729.8 841.9 L729.9 855.5 L730.0 853.3 L730.0 853.3 L730.4 839.2 L730.5 847.4 L730.6 860.9 L730.7 880.3 L731.0 840.0 L731.0 823.6 L731.1 826.5 L731.1 844.3 L731.4 925.0 L731.5 925.0 L731.6 898.4 L731.6 898.4 L731.7 819.9 L731.9 843.9 L732.0 861.5 L732.1 863.9 L732.4 838.6 L732.4 821.6 L732.5 819.3 L732.8 820.5 L733.0 855.3 L733.0 855.3 L733.1 925.0 L733.1 925.0 L733.5 849.5 L733.5 925.0 L733.6 863.6 L733.6 863.6 L733.9 752.1 L733.9 752.1 L734.0 746.6 L734.0 746.4 L734.5 884.9 L734.5 884.9 L734.6 845.9 L735.0 921.6 L735.0 845.2 L735.0 921.6 L735.1 871.5 L735.1 871.5 L735.4 807.5 L735.4 829.9 L735.5 854.4 L735.5 809.7 L735.6 903.6 L736.0 887.5 L736.1 925.0 L736.1 925.0 L736.4 819.3 L736.4 801.2 L736.5 807.0 L736.5 822.4 L736.9 925.0 L737.0 875.3 L737.1 834.0 L737.1 834.0 L737.2 828.9 L737.5 832.1 L737.5 843.1 L737.6 826.4 L737.7 904.7 L738.0 840.3 L738.1 850.6 L738.4 925.0 L738.5 812.9 L738.5 925.0 L738.5 914.0 L738.5 914.0 L738.5 831.1 L739.0 888.6 L739.1 905.0 L739.1 905.0 L739.4 834.5 L739.4 837.5 L739.5 839.2 L739.7 853.5 L740.0 823.5 L740.0 818.0 L740.1 814.2 L740.1 821.1 L740.3 889.3 L740.4 846.4 L740.5 836.6 L740.6 832.2 L740.8 925.0 L741.0 850.9 L741.1 823.7 L741.2 814.3 L741.5 833.4 L741.5 833.4 L741.6 830.6 L741.6 830.6 L741.9 460.7 L741.9 460.7 L742.0 426.9 L742.1 415.8 L742.5 606.5 L742.5 606.5 L742.6 730.6 L742.6 730.6 L742.6 881.5 L743.0 864.9 L743.1 849.7 L743.3 816.6 L743.4 924.5 L743.4 924.5 L743.5 858.8 L743.5 834.4 L743.7 898.5 L744.0 873.1 L744.0 891.8 L744.0 891.8 L744.3 843.0 L744.5 856.0 L744.6 838.5 L744.6 856.0 L744.9 902.5 L745.0 851.6 L745.1 825.8 L745.2 842.3 L745.3 873.6 L745.4 831.6 L745.5 818.4 L745.6 814.2 L745.7 888.1 L745.9 823.3 L746.0 827.3 L746.2 841.0 L746.4 828.7 L746.4 812.8 L746.5 824.5 L746.6 846.2 L746.9 830.2 L747.0 828.5 L747.0 852.2 L747.1 902.7 L747.5 829.6 L747.5 829.9 L747.5 837.1 L747.5 839.5 L748.0 860.6 L748.0 860.6 L748.1 869.2 L748.1 869.2 L748.5 843.9 L748.5 859.5 L748.6 892.5 L748.6 892.5 L749.0 822.9 L749.0 814.6 L749.1 817.3 L749.2 816.0 L749.5 853.9 L749.5 853.9 L749.6 867.9 L749.7 815.4 L750.0 925.0 L750.0 925.0 L750.1 901.2 L750.1 901.2 L750.5 826.3 L750.5 815.8 L750.5 814.3 L750.6 824.7 L751.0 863.8 L751.0 863.8 L751.0 860.0 L751.1 829.5 L751.3 925.0 L751.4 906.6 L751.5 916.8 L751.5 916.8 L751.9 821.5 L751.9 806.0 L752.0 813.2 L752.0 827.8 L752.3 925.0 L752.4 925.0 L752.5 925.0 L752.5 925.0 L752.8 838.9 L753.0 835.8 L753.1 862.4 L753.2 823.9 L753.4 886.0 L753.5 882.7 L753.6 896.9 L753.6 906.8 L753.8 867.6 L754.0 896.9 L754.0 872.0 L754.3 921.3 L754.4 834.6 L754.4 889.3 L754.5 897.8 L754.6 925.0 L754.6 819.6 L755.0 820.1 L755.1 811.1 L755.1 828.6 L755.3 875.8 L755.5 870.5 L755.6 925.0 L755.6 925.0 L755.7 849.8 L755.9 880.1 L756.0 925.0 L756.0 925.0 L756.2 832.3 L756.5 832.4 L756.6 825.6 L756.7 835.6 L757.0 852.9 L757.0 852.9 L757.0 848.1 L757.4 880.9 L757.4 827.0 L757.4 880.9 L757.5 886.2 L757.7 892.7 L758.0 828.7 L758.0 824.6 L758.1 847.8 L758.1 842.5 L758.1 925.0 L758.4 839.1 L758.5 828.3 L758.8 880.4 L759.0 764.2 L759.0 764.9 L759.1 771.3 L759.1 771.5 L759.4 901.3 L759.4 877.5 L759.5 869.8 L759.8 842.9 L759.8 925.0 L760.0 879.9 L760.1 837.0 L760.2 824.5 L760.4 849.5 L760.4 849.5 L760.5 860.4 L760.5 860.4 L760.8 810.1 L761.0 813.0 L761.0 821.8 L761.4 852.3 L761.5 836.7 L761.5 841.1 L761.6 837.1 L761.6 829.1 L761.8 885.3 L762.0 853.5 L762.0 853.6 L762.2 925.0 L762.5 831.2 L762.5 818.5 L762.6 826.9 L762.7 893.7 L763.0 519.2 L763.0 519.2 L763.1 460.7 L763.2 415.8 L763.4 519.2 L763.4 519.2 L763.5 606.5 L763.5 606.5 L764.0 850.7 L764.0 850.7 L764.0 862.7 L764.2 832.3 L764.4 914.7 L764.5 883.8 L764.6 903.5 L764.7 925.0 L764.9 830.1 L765.0 855.3 L765.1 925.0 L765.1 925.0 L765.3 841.1 L765.4 866.1 L765.5 881.4 L765.7 836.0 L765.9 915.3 L765.9 908.1 L766.0 906.8 L766.1 925.0 L766.4 820.7 L766.5 838.5 L766.5 841.7 L766.7 864.7 L766.9 820.2 L767.0 859.6 L767.0 881.8 L767.0 881.8 L767.5 821.9 L767.5 817.0 L767.5 829.0 L767.5 831.7 L767.7 925.0 L768.0 844.0 L768.0 842.7 L768.2 843.6 L768.5 874.1 L768.5 874.1 L768.5 858.1 L768.7 873.5 L768.9 826.2 L769.0 814.7 L769.0 839.4 L769.1 901.4 L769.3 836.6 L769.5 870.4 L769.5 869.0 L769.7 853.9 L769.8 889.8 L770.0 879.1 L770.0 925.0 L770.0 925.0 L770.2 857.1 L770.5 925.0 L770.5 870.3 L770.5 870.3 L770.7 814.1 L770.9 832.1 L771.0 835.5 L771.2 808.3 L771.5 887.6 L771.5 887.6 L771.6 884.2 L771.6 884.2 L771.7 838.3 L772.0 867.4 L772.1 896.0 L772.1 896.0 L772.4 813.3 L772.5 820.4 L772.5 842.5 L772.8 886.7 L773.0 834.5 L773.0 850.9 L773.0 836.2 L773.0 834.1 L773.2 843.2 L773.4 831.0 L773.5 832.4 L773.8 886.6 L774.0 831.0 L774.0 825.2 L774.0 813.6 L774.0 827.0 L774.4 899.4 L774.5 888.5 L774.5 882.8 L774.5 882.8 L774.7 804.6 L774.9 825.3 L775.0 822.8 L775.0 827.8 L775.3 900.2 L775.5 879.9 L775.5 902.7 L775.6 925.0 L775.9 825.3 L775.9 863.0 L776.0 837.1 L776.0 823.6 L776.4 840.8 L776.5 839.1 L776.5 823.4 L776.6 822.4 L776.9 861.5 L776.9 861.5 L777.0 863.2 L777.0 830.5 L777.4 896.8 L777.5 864.3 L777.5 845.7 L777.7 890.9 L777.7 829.2 L777.9 885.3 L778.0 833.6 L778.1 824.8 L778.3 882.7 L778.5 823.8 L778.5 822.3 L778.7 823.1 L779.0 850.2 L779.0 850.2 L779.1 890.0 L779.1 890.0 L779.2 837.4 L779.5 875.6 L779.5 908.0 L779.5 908.0 L779.8 826.3 L780.0 858.8 L780.0 835.1 L780.1 820.6 L780.4 867.4 L780.5 860.6 L780.6 831.8 L780.8 823.8 L781.0 887.5 L781.0 887.5 L781.0 855.7 L781.0 855.7 L781.1 825.6 L781.5 854.9 L781.5 900.3 L781.7 834.1 L781.7 925.0 L782.0 838.7 L782.0 825.0 L782.1 812.0 L782.3 906.5 L782.5 837.6 L782.6 859.4 L782.7 925.0 L782.9 828.4 L782.9 925.0 L783.0 911.9 L783.3 925.0 L783.4 817.9 L783.4 852.8 L783.5 828.3 L783.5 824.3 L784.0 925.0 L784.0 925.0 L784.0 891.9 L784.0 891.9 L784.5 415.8 L784.5 415.8 L784.5 426.9 L784.5 426.9 L785.0 878.6 L785.0 878.6 L785.0 904.6 L785.3 829.4 L785.5 911.0 L785.5 911.0 L785.5 879.8 L785.6 888.3 L785.8 805.6 L786.0 836.9 L786.0 879.3 L786.0 849.0 L786.4 925.0 L786.4 865.0 L786.5 856.2 L786.6 877.2 L786.9 816.3 L786.9 818.6 L787.0 822.6 L787.0 824.2 L787.2 909.7 L787.5 861.1 L787.6 885.0 L787.7 824.8 L788.0 900.1 L788.0 900.1 L788.0 877.3 L788.2 831.0 L788.4 905.1 L788.5 864.3 L788.5 857.8 L788.5 836.8 L789.0 870.7 L789.0 870.7 L789.0 888.7 L789.2 925.0 L789.4 832.0 L789.5 861.4 L789.6 844.4 L789.6 833.5 L789.9 882.4 L790.0 876.4 L790.0 882.6 L790.1 898.2 L790.5 831.2 L790.5 819.8 L790.5 812.5 L790.8 876.3 L791.0 810.6 L791.0 816.3 L791.1 815.5 L791.1 814.3 L791.2 851.4 L791.5 808.8 L791.5 814.5 L791.7 925.0 L791.9 823.9 L791.9 806.8 L792.0 817.8 L792.3 821.7 L792.5 925.0 L792.5 925.0 L792.5 895.2 L792.5 895.2 L792.8 819.3 L792.9 868.3 L793.0 867.5 L793.2 879.0 L793.4 828.4 L793.5 813.1 L793.5 812.1 L793.6 824.0 L793.8 834.0 L793.9 830.4 L794.0 825.0 L794.4 810.0 L794.5 906.6 L794.5 906.6 L794.5 843.7 L794.5 817.3 L795.0 883.1 L795.0 883.1 L795.0 849.4 L795.4 851.7 L795.4 900.1 L795.4 900.1 L795.5 915.2 L795.5 915.2 L796.0 833.2 L796.0 880.6 L796.0 866.8 L796.0 835.9 L796.5 919.1 L796.5 919.1 L796.5 896.2 L796.6 925.0 L797.0 819.9 L797.0 801.9 L797.0 813.2 L797.0 831.3 L797.3 891.9 L797.4 857.6 L797.5 877.7 L797.7 904.6 L798.0 786.8 L798.0 790.6 L798.0 782.4 L798.0 780.0 L798.3 905.1 L798.5 822.0 L798.5 834.6 L798.8 820.9 L799.0 897.7 L799.0 897.7 L799.0 852.1 L799.2 925.0 L799.5 805.4 L799.5 798.0 L799.5 800.9 L799.5 814.9 L800.0 853.3 L800.0 853.3 L800.0 916.4 L800.0 829.7 L800.1 925.0 L800.5 875.5 L800.5 868.0 L800.5 868.0 L801.0 819.8 L801.0 841.1 L801.0 838.4 L801.1 925.0 L801.5 809.9 L801.5 811.4 L801.5 825.3 L801.5 823.1 L801.7 925.0 L801.9 820.8 L802.0 827.7 L802.1 844.2 L802.4 907.3 L802.5 869.5 L802.5 846.9 L802.6 830.5 L802.8 925.0 L803.0 870.0 L803.0 869.1 L803.4 921.7 L803.5 840.7 L803.5 853.6 L803.5 831.8 L803.6 856.0 L803.9 813.5 L803.9 820.9 L804.0 827.3 L804.0 825.7 L804.4 885.8 L804.5 832.2 L804.5 870.2 L804.6 925.0 L804.9 823.3 L805.0 820.6 L805.0 852.7 L805.1 920.2 L805.5 460.7 L805.5 460.7 L805.6 426.9 L805.6 415.8 L805.9 827.9 L806.0 819.5 L806.0 814.0 L806.1 819.5 L806.4 845.2 L806.4 845.2 L806.5 837.4 L806.8 915.6 L806.8 811.5 L807.0 833.1 L807.0 835.4 L807.2 814.5 L807.4 925.0 L807.5 862.7 L807.6 848.8 L807.8 893.6 L808.0 816.3 L808.0 831.6 L808.0 825.3 L808.0 814.2 L808.5 857.0 L808.5 857.0 L808.5 906.3 L808.5 906.3 L808.5 845.4 L809.0 841.9 L809.0 855.9 L809.1 871.8 L809.2 816.6 L809.5 850.7 L809.5 870.5 L809.5 827.5 L809.6 925.0 L810.0 843.2 L810.0 842.7 L810.2 878.1 L810.4 805.7 L810.5 820.5 L810.5 860.7 L810.7 925.0 L810.9 827.4 L810.9 815.6 L811.0 824.1 L811.1 864.9 L811.3 800.8 L811.5 862.2 L811.5 842.1 L811.5 823.5 L811.8 925.0 L812.0 891.5 L812.0 871.6 L812.0 871.6 L812.3 817.5 L812.5 860.6 L812.5 845.5 L812.5 820.2 L812.7 925.0 L813.0 847.3 L813.0 836.9 L813.2 868.9 L813.3 831.2 L813.5 853.2 L813.5 832.4 L813.8 835.7 L813.9 911.2 L814.0 839.0 L814.0 827.4 L814.2 865.4 L814.4 827.1 L814.5 847.9 L814.5 846.4 L814.7 828.5 L814.8 925.0 L815.0 861.8 L815.0 857.9 L815.3 838.5 L815.5 894.0 L815.5 894.0 L815.5 879.0 L815.9 916.1 L816.0 818.8 L816.0 814.2 L816.0 817.1 L816.0 823.6 L816.4 925.0 L816.5 857.2 L816.5 851.2 L816.9 860.9 L817.0 832.6 L817.0 833.4 L817.0 853.4 L817.2 886.7 L817.4 819.9 L817.5 824.7 L817.5 863.0 L817.6 925.0 L817.9 831.3 L818.0 906.5 L818.0 869.0 L818.0 869.0 L818.3 822.0 L818.5 816.6 L818.5 802.6 L818.6 810.7 L818.9 817.4 L819.0 811.7 L819.0 812.1 L819.1 806.9 L819.1 839.3 L819.5 804.2 L819.5 814.7 L819.7 925.0 L820.0 821.1 L820.0 831.7 L820.0 832.3 L820.0 815.4 L820.1 925.0 L820.5 837.2 L820.5 842.5 L820.7 827.4 L820.8 860.9 L821.0 829.8 L821.0 839.3 L821.2 823.7 L821.5 902.4 L821.5 902.4 L821.5 898.0 L821.5 898.0 L822.0 832.3 L822.0 850.5 L822.0 834.5 L822.1 809.6 L822.5 925.0 L822.5 925.0 L822.5 915.3 L822.7 843.8 L822.8 917.6 L823.0 888.6 L823.0 925.0 L823.0 925.0 L823.5 867.6 L823.5 872.6 L823.5 867.1 L823.9 872.6 L824.0 821.5 L824.0 814.6 L824.0 792.9 L824.1 803.8 L824.4 925.0 L824.5 868.6 L824.5 854.1 L824.7 814.9 L825.0 910.8 L825.0 910.8 L825.0 838.4 L825.1 817.9 L825.3 908.9 L825.5 870.7 L825.5 876.6 L825.6 892.6 L825.8 810.8 L826.0 809.4 L826.0 806.7 L826.0 819.8 L826.5 845.3 L826.5 845.3 L826.5 836.0 L826.5 836.0 L826.8 415.8 L827.0 730.1 L827.0 844.1 L827.2 831.3 L827.5 901.5 L827.5 901.5 L827.5 858.2 L827.5 858.2 L827.9 807.1 L828.0 812.6 L828.0 810.6 L828.2 820.6 L828.4 883.2 L828.5 852.9 L828.5 845.6 L828.5 845.6 L828.9 815.2 L829.0 844.8 L829.0 834.3 L829.0 843.2 L829.2 925.0 L829.5 872.8 L829.5 878.4 L829.7 925.0 L829.8 845.0 L830.0 853.8 L830.0 842.6 L830.1 861.4 L830.3 813.1 L830.5 805.3 L830.5 809.3 L830.9 814.6 L831.0 882.1 L831.0 882.1 L831.0 911.6 L831.3 925.0 L831.4 804.5 L831.5 812.8 L831.5 836.1 L831.6 886.3 L831.9 817.8 L832.0 858.6 L832.0 878.5 L832.3 836.7 L832.5 925.0 L832.5 925.0 L832.5 925.0 L832.5 925.0 L833.0 829.5 L833.0 817.0 L833.0 807.8 L833.3 850.2 L833.4 818.8 L833.5 812.9 L833.5 824.7 L833.5 824.2 L833.9 876.6 L834.0 846.2 L834.0 828.1 L834.2 827.7 L834.5 908.0 L834.5 872.5 L834.5 844.1 L834.7 821.9 L834.9 903.9 L835.0 892.6 L835.0 864.0 L835.1 925.0 L835.4 818.1 L835.5 805.1 L835.5 810.6 L835.6 813.5 L835.8 897.2 L836.0 837.9 L836.0 820.8 L836.3 827.2 L836.5 837.3 L836.5 837.3 L836.5 853.2 L836.8 922.4 L837.0 825.0 L837.0 831.2 L837.0 825.1 L837.0 829.1 L837.4 877.5 L837.5 832.3 L837.5 835.0 L837.9 832.2 L838.0 923.4 L838.0 923.4 L838.0 872.3 L838.2 907.0 L838.5 817.9 L838.5 825.2 L838.5 848.5 L838.5 821.5 L838.8 886.1 L839.0 868.1 L839.0 852.2 L839.0 827.1 L839.3 925.0 L839.5 848.3 L839.5 843.5 L839.7 904.5 L840.0 822.9 L840.0 807.3 L840.0 797.8 L840.1 809.5 L840.2 856.4 L840.5 810.4 L840.5 805.7 L840.6 808.2 L840.9 925.0 L841.0 916.6 L841.0 908.8 L841.1 834.5 L841.5 920.8 L841.5 870.1 L841.5 837.0 L841.5 837.0 L841.9 805.6 L842.0 826.6 L842.0 840.1 L842.4 843.0 L842.5 901.0 L842.5 901.0 L842.5 865.3 L842.7 811.8 L842.8 884.7 L843.0 818.5 L843.0 827.2 L843.2 833.2 L843.4 925.0 L843.5 872.6 L843.5 837.3 L843.5 836.6 L843.6 891.3 L844.0 844.2 L844.0 848.6 L844.2 820.6 L844.3 925.0 L844.5 832.6 L844.5 825.4 L844.7 829.9 L844.9 815.5 L845.0 828.8 L845.0 864.6 L845.1 925.0 L845.1 806.6 L845.5 830.3 L845.5 833.2 L845.6 925.0 L846.0 821.9 L846.0 804.1 L846.0 814.9 L846.1 925.0 L846.3 802.6 L846.5 855.5 L846.5 833.7 L846.8 918.4 L846.9 827.4 L847.0 853.9 L847.0 898.0 L847.0 898.0 L847.2 822.2 L847.5 839.1 L847.5 862.5 L847.6 911.0 L847.9 415.8 L848.0 426.9 L848.0 460.7 L848.0 460.7 L848.2 894.1 L848.5 846.9 L848.5 836.9 L848.7 925.0 L849.0 815.8 L849.0 799.1 L849.0 814.0 L849.3 811.3 L849.4 925.0 L849.5 925.0 L849.5 897.5 L849.5 897.5 L849.7 822.1 L850.0 867.5 L850.0 870.1 L850.0 870.1 L850.3 814.4 L850.5 820.8 L850.5 838.1 L850.8 827.7 L851.0 896.6 L851.0 877.0 L851.0 885.5 L851.1 910.3 L851.4 823.4 L851.5 836.4 L851.5 828.7 L851.8 887.5 L851.9 813.9 L852.0 812.2 L852.0 817.3 L852.0 826.1 L852.2 899.0 L852.5 828.0 L852.5 813.9 L852.7 898.4 L852.9 811.3 L853.0 820.6 L853.0 827.2 L853.3 894.0 L853.4 823.8 L853.5 836.8 L853.5 843.1 L853.6 925.0 L853.7 814.6 L854.0 826.9 L854.0 828.8 L854.1 818.6 L854.5 923.9 L854.5 923.9 L854.5 873.6 L854.6 816.7 L854.8 923.8 L855.0 853.1 L855.0 871.8 L855.1 815.1 L855.4 912.6 L855.5 875.4 L855.5 899.4 L855.6 925.0 L856.0 846.0 L856.0 893.7 L856.0 895.3 L856.1 908.2 L856.1 819.8 L856.5 828.1 L856.5 839.3 L856.9 813.1 L856.9 873.7 L857.0 869.5 L857.0 851.8 L857.1 877.0 L857.4 823.3 L857.5 819.0 L857.5 822.6 L857.7 870.3 L858.0 814.4 L858.0 820.0 L858.0 855.7 L858.2 824.0 L858.3 896.5 L858.5 822.3 L858.5 823.5 L858.6 919.7 L858.7 822.0 L859.0 868.3 L859.0 818.5 L859.3 880.2 L859.4 810.9 L859.5 827.2 L859.5 846.3 L859.5 925.0 L859.6 814.5 L860.0 821.6 L860.0 820.0 L860.1 889.2 L860.4 834.4 L860.5 886.2 L860.5 916.4 L860.6 925.0 L860.9 828.5 L861.0 870.3 L861.0 834.8 L861.0 834.8 L861.2 814.8 L861.5 827.7 L861.5 825.0 L861.9 887.5 L861.9 816.2 L862.0 861.5 L862.0 871.3 L862.1 925.0 L862.2 814.0 L862.5 808.2 L862.5 804.6 L862.5 814.7 L862.7 925.0 L863.0 843.3 L863.0 844.6 L863.1 825.4 L863.4 915.6 L863.5 823.4 L863.5 839.8 L863.5 897.4 L863.9 819.6 L864.0 866.4 L864.0 864.2 L864.0 864.2 L864.3 804.3 L864.5 832.7 L864.5 810.3 L864.5 814.1 L864.7 859.3 L865.0 807.7 L865.0 816.7 L865.1 898.8 L865.3 821.3 L865.5 835.0 L865.5 852.9 L865.8 874.0 L865.9 824.7 L866.0 872.9 L866.0 885.8 L866.3 925.0 L866.4 800.2 L866.5 850.8 L866.5 872.7 L866.8 899.7 L866.9 817.7 L867.0 821.5 L867.0 833.5 L867.2 922.5 L867.4 815.3 L867.5 868.9 L867.5 852.1 L867.6 911.9 L867.8 820.8 L868.0 878.3 L868.0 868.4 L868.1 816.0 L868.4 912.5 L868.5 859.7 L868.5 855.2 L868.8 876.3 L869.0 606.5 L869.0 606.5 L869.0 519.2 L869.1 415.8 L869.5 856.4 L869.5 856.4 L869.5 882.0 L869.7 820.7 L869.8 906.5 L870.0 851.0 L870.0 856.9 L870.2 827.4 L870.3 925.0 L870.5 828.5 L870.5 834.3 L870.6 809.4 L870.8 878.5 L871.0 826.8 L871.0 838.2 L871.1 881.3 L871.3 818.2 L871.5 822.2 L871.5 827.5 L871.6 925.0 L872.0 828.4 L872.0 844.8 L872.0 904.0 L872.0 827.3 L872.3 925.0 L872.5 839.3 L872.5 831.9 L872.6 809.6 L873.0 867.2 L873.0 846.0 L873.0 824.2 L873.2 925.0 L873.4 816.9 L873.5 903.6 L873.5 872.0 L873.7 893.7 L873.9 790.2 L874.0 799.0 L874.0 799.5 L874.1 867.9 L874.3 804.2 L874.5 816.5 L874.5 810.5 L874.5 810.4 L874.9 882.6 L875.0 828.8 L875.0 838.4 L875.0 807.4 L875.1 925.0 L875.5 848.1 L875.5 858.5 L875.7 904.1 L875.9 822.5 L876.0 814.5 L876.0 825.6 L876.1 925.0 L876.5 819.0 L876.5 856.1 L876.5 844.0 L876.6 900.0 L876.9 812.1 L877.0 865.3 L877.0 827.1 L877.4 808.0 L877.5 925.0 L877.5 869.1 L877.5 838.9 L877.7 807.8 L877.9 925.0 L878.0 865.0 L878.0 824.6 L878.1 816.4 L878.3 925.0 L878.5 866.0 L878.5 826.9 L878.8 804.2 L878.9 868.9 L879.0 834.2 L879.0 838.3 L879.3 891.9 L879.4 806.7 L879.5 813.3 L879.5 812.3 L879.6 821.0 L879.9 849.9 L880.0 816.0 L880.0 815.0 L880.2 902.9 L880.5 815.1 L880.5 814.5 L880.5 817.2 L880.5 825.1 L880.7 893.9 L881.0 872.8 L881.0 898.3 L881.1 925.0 L881.5 809.4 L881.5 802.0 L881.5 819.1 L881.5 816.2 L881.6 897.7 L882.0 882.5 L882.0 865.8 L882.2 925.0 L882.3 812.5 L882.5 833.1 L882.5 822.9 L882.5 800.3 L882.7 925.0 L883.0 870.5 L883.0 839.8 L883.1 858.6 L883.3 822.4 L883.5 827.9 L883.5 815.9 L883.9 808.7 L884.0 890.8 L884.0 874.9 L884.0 862.8 L884.0 862.8 L884.3 807.1 L884.5 848.4 L884.5 837.7 L884.5 825.8 L884.9 872.0 L885.0 854.2 L885.0 853.6 L885.2 816.6 L885.5 878.8 L885.5 878.8 L885.5 879.9 L885.6 916.8 L885.8 808.8 L886.0 836.5 L886.0 835.1 L886.1 908.5 L886.2 827.6 L886.5 857.4 L886.5 863.4 L886.6 891.7 L886.8 814.8 L887.0 848.5 L887.0 851.9 L887.1 802.7 L887.2 878.1 L887.5 849.2 L887.5 846.8 L888.0 913.6 L888.0 807.7 L888.0 885.5 L888.0 850.7 L888.1 925.0 L888.5 828.4 L888.5 815.4 L888.5 811.5 L888.6 921.0 L888.7 807.1 L889.0 867.7 L889.0 855.6 L889.2 925.0 L889.3 834.9 L889.5 877.1 L889.5 865.9 L889.8 916.4 L890.0 815.4 L890.0 842.3 L890.0 840.1 L890.1 925.0 L890.3 415.8 L890.5 831.6 L890.5 859.4 L890.7 893.6 L890.8 805.5 L891.0 870.5 L891.0 871.2 L891.3 828.3 L891.4 906.4 L891.5 899.9 L891.5 841.2 L891.9 925.0 L892.0 803.1 L892.0 786.0 L892.0 784.0 L892.0 801.3 L892.3 925.0 L892.5 843.4 L892.5 894.5 L892.5 894.5 L892.8 817.2 L893.0 832.2 L893.0 826.6 L893.1 924.2 L893.4 806.0 L893.5 863.8 L893.5 874.3 L893.7 904.9 L894.0 814.6 L894.0 851.6 L894.0 819.4 L894.1 885.1 L894.3 799.2 L894.5 847.5 L894.5 855.2 L894.6 925.0 L895.0 820.4 L895.0 925.0 L895.0 860.6 L895.0 808.8 L895.5 894.5 L895.5 838.9 L895.5 835.6 L895.6 819.3 L895.8 925.0 L896.0 854.1 L896.0 852.0 L896.1 925.0 L896.4 802.6 L896.5 800.7 L896.5 825.9 L896.6 807.5 L897.0 877.3 L897.0 877.3 L897.0 859.3 L897.2 804.4 L897.3 925.0 L897.5 839.0 L897.5 847.3 L897.7 925.0 L897.7 818.4 L898.0 835.1 L898.0 825.9 L898.3 806.9 L898.4 920.5 L898.5 814.8 L898.5 821.4 L898.7 893.3 L899.0 806.3 L899.0 853.6 L899.0 847.0 L899.0 803.7 L899.4 925.0 L899.5 812.3 L899.5 820.3 L899.6 925.0 L900.0 799.3 L900.0 810.4 L900.0 820.8 L900.0 813.3 L900.5 925.0 L900.5 853.5 L900.5 818.6 L900.6 900.5 L900.7 806.8 L901.0 884.7 L901.0 925.0 L901.0 925.0 L901.3 819.8 L901.5 869.3 L901.5 857.2 L901.6 800.5 L901.8 925.0 L902.0 925.0 L902.0 833.5 L902.1 925.0 L902.3 823.6 L902.5 869.9 L902.5 838.1 L902.8 919.3 L902.9 826.6 L903.0 827.9 L903.0 837.2 L903.3 814.7 L903.5 925.0 L903.5 925.0 L903.5 881.7 L903.7 818.1 L903.8 925.0 L904.0 848.7 L904.0 817.8 L904.4 920.4 L904.5 814.5 L904.5 819.5 L904.5 811.6 L904.5 809.7 L904.7 922.1 L905.0 821.8 L905.0 815.7 L905.4 800.7 L905.5 924.8 L905.5 917.1 L905.5 863.7 L905.7 798.9 L905.9 913.2 L906.0 828.0 L906.0 821.9 L906.4 925.0 L906.5 807.9 L906.5 802.2 L906.5 801.5 L906.6 802.2 L906.7 911.6 L907.0 831.2 L907.0 846.8 L907.2 817.4 L907.3 925.0 L907.5 844.6 L907.5 816.6 L907.5 823.8 L907.9 910.9 L908.0 868.2 L908.0 848.8 L908.4 905.0 L908.5 805.1 L908.5 809.2 L908.5 812.6 L908.8 858.2 L908.9 807.7 L909.0 841.5 L909.0 863.4 L909.0 894.5 L909.5 822.7 L909.5 808.7 L909.5 806.1 L909.7 812.8 L909.9 900.6 L910.0 824.2 L910.0 815.6 L910.1 925.0 L910.2 815.1 L910.5 925.0 L910.5 851.8 L910.8 903.0 L910.9 808.1 L911.0 797.0 L911.0 788.3 L911.2 854.9 L911.5 415.8 L911.5 415.8 L911.5 426.9 L911.5 426.9 L911.8 925.0 L912.0 829.0 L912.0 842.7 L912.3 925.0 L912.3 819.2 L912.5 820.8 L912.5 813.7 L912.5 821.5 L912.8 909.1 L913.0 848.1 L913.0 865.2 L913.3 798.2 L913.5 904.1 L913.5 857.6 L913.5 818.8 L913.5 814.5 L913.8 904.3 L914.0 853.3 L914.0 872.1 L914.2 817.6 L914.5 925.0 L914.5 878.9 L914.5 897.0 L914.5 897.0 L914.6 809.7 L915.0 810.7 L915.0 834.0 L915.3 909.3 L915.4 804.1 L915.5 857.3 L915.5 839.7 L915.7 816.4 L915.9 920.5 L916.0 822.3 L916.0 798.0 L916.0 804.7 L916.1 889.6 L916.5 839.2 L916.5 823.7 L916.6 804.1 L916.9 881.1 L917.0 829.8 L917.0 836.6 L917.2 805.2 L917.3 925.0 L917.5 815.8 L917.5 809.8 L917.6 805.6 L917.9 925.0 L918.0 862.1 L918.0 824.4 L918.1 881.5 L918.3 822.6 L918.5 868.8 L918.5 885.3 L918.5 885.3 L918.9 822.0 L919.0 859.4 L919.0 851.2 L919.1 909.8 L919.5 816.1 L919.5 818.9 L919.5 805.4 L919.7 925.0 L919.9 801.7 L920.0 883.2 L920.0 923.0 L920.0 799.9 L920.2 925.0 L920.5 895.7 L920.5 862.1 L920.6 818.5 L920.8 865.1 L921.0 858.1 L921.0 872.0 L921.1 818.4 L921.2 919.3 L921.5 823.6 L921.5 811.4 L921.7 921.1 L921.7 809.1 L922.0 838.2 L922.0 863.9 L922.1 798.4 L922.2 925.0 L922.5 822.6 L922.5 817.3 L922.7 882.2 L922.9 825.2 L923.0 839.7 L923.0 829.2 L923.2 925.0 L923.3 822.0 L923.5 889.5 L923.5 894.9 L923.6 905.7 L923.8 816.3 L924.0 823.2 L924.0 817.3 L924.2 925.0 L924.3 803.1 L924.5 925.0 L924.5 886.1 L924.6 795.2 L924.9 925.0 L925.0 833.4 L925.0 837.0 L925.1 907.6 L925.1 820.1 L925.5 903.5 L925.5 870.0 L925.9 923.0 L926.0 819.4 L926.0 820.4 L926.0 829.3 L926.4 925.0 L926.5 805.1 L926.5 817.1 L926.5 806.4 L926.5 805.3 L927.0 925.0 L927.0 925.0 L927.0 925.0 L927.0 925.0 L927.2 813.2 L927.5 841.7 L927.5 812.7 L927.6 919.3 L927.9 808.1 L928.0 827.9 L928.0 816.7 L928.2 821.9 L928.4 925.0 L928.5 892.3 L928.5 918.8 L928.6 800.2 L928.8 925.0 L929.0 923.6 L929.0 862.2 L929.1 925.0 L929.3 812.0 L929.5 891.4 L929.5 847.3 L929.8 808.4 L930.0 893.2 L930.0 874.8 L930.0 839.1 L930.1 801.7 L930.2 925.0 L930.5 858.1 L930.5 874.3 L930.6 901.8 L930.8 812.8 L931.0 819.0 L931.0 851.2 L931.3 805.2 L931.4 913.0 L931.5 869.9 L931.5 872.9 L931.5 796.0 L931.7 923.2 L932.0 826.7 L932.0 837.8 L932.1 918.8 L932.5 805.2 L932.5 796.4 L932.5 806.7 L932.6 416.0 L932.9 861.3 L933.0 833.0 L933.0 853.9 L933.1 914.9 L933.4 810.9 L933.5 893.9 L933.5 854.0 L933.8 816.3 L933.9 880.2 L934.0 879.5 L934.0 845.8 L934.1 925.0 L934.3 812.1 L934.5 825.5 L934.5 822.3 L934.6 891.7 L934.7 800.5 L935.0 865.0 L935.0 899.4 L935.1 923.7 L935.4 801.6 L935.5 890.0 L935.5 857.3 L935.8 823.3 L935.9 925.0 L936.0 890.0 L936.0 877.8 L936.1 808.4 L936.1 904.1 L936.5 822.8 L936.5 841.0 L936.6 912.3 L936.9 806.2 L937.0 813.2 L937.0 857.9 L937.2 813.1 L937.5 925.0 L937.5 925.0 L937.5 855.4 L937.7 925.0 L938.0 808.9 L938.0 829.6 L938.0 852.1 L938.2 807.2 L938.4 925.0 L938.5 856.3 L938.5 827.9 L938.6 925.0 L938.7 803.3 L939.0 827.9 L939.0 856.2 L939.0 909.9 L939.2 819.3 L939.5 841.1 L939.5 833.3 L939.8 925.0 L940.0 817.8 L940.0 839.3 L940.0 841.3 L940.1 800.3 L940.2 925.0 L940.5 868.6 L940.5 847.9 L940.5 810.4 L940.8 925.0 L941.0 837.6 L941.0 835.8 L941.3 925.0 L941.5 810.3 L941.5 796.0 L941.5 798.6 L941.5 810.1 L941.8 883.4 L942.0 827.0 L942.0 837.0 L942.1 806.9 L942.2 925.0 L942.5 847.7 L942.5 819.2 L942.6 925.0 L942.9 809.4 L943.0 925.0 L943.0 925.0 L943.0 925.0 L943.4 807.7 L943.5 848.5 L943.5 840.8 L943.6 820.8 L943.8 913.6 L944.0 831.0 L944.0 815.3 L944.1 810.8 L944.3 925.0 L944.5 889.9 L944.5 866.4 L944.7 925.0 L945.0 810.7 L945.0 822.4 L945.0 827.0 L945.0 804.9 L945.5 925.0 L945.5 925.0 L945.5 850.1 L945.8 914.2 L946.0 813.5 L946.0 804.8 L946.0 809.2 L946.1 797.6 L946.4 894.8 L946.5 848.2 L946.5 880.2 L946.6 925.0 L946.7 823.5 L947.0 846.9 L947.0 809.8 L947.3 804.3 L947.4 914.8 L947.5 876.7 L947.5 850.4 L947.9 905.4 L947.9 805.9 L948.0 850.8 L948.0 868.5 L948.1 819.1 L948.4 925.0 L948.5 881.5 L948.5 892.4 L948.7 800.8 L948.8 924.4 L949.0 851.0 L949.0 839.3 L949.2 925.0 L949.4 805.9 L949.5 917.7 L949.5 864.5 L949.6 804.3 L949.8 915.7 L950.0 904.9 L950.0 857.5 L950.4 805.5 L950.4 925.0 L950.5 830.2 L950.5 838.4 L950.8 806.8 L950.9 880.3 L951.0 851.5 L951.0 857.7 L951.3 925.0 L951.5 815.4 L951.5 805.5 L951.5 809.3 L951.7 886.8 L952.0 799.1 L952.0 813.5 L952.0 820.9 L952.0 814.1 L952.1 925.0 L952.5 825.0 L952.5 820.4 L952.6 925.0 L952.9 802.1 L953.0 825.1 L953.0 839.1 L953.4 911.4 L953.4 804.0 L953.5 845.7 L953.5 871.5 L953.5 925.0 L953.8 416.6 L954.0 815.5 L954.0 834.9 L954.0 925.0 L954.3 820.2 L954.5 843.4 L954.5 825.5 L954.7 925.0 L955.0 796.8 L955.0 793.5 L955.0 810.7 L955.0 821.5 L955.4 925.0 L955.5 907.1 L955.5 859.2 L955.8 804.4 L956.0 900.7 L956.0 900.7 L956.0 874.4 L956.0 925.0 L956.3 816.0 L956.5 863.6 L956.5 823.4 L956.5 809.0 L956.6 925.0 L957.0 831.8 L957.0 822.5 L957.1 813.8 L957.4 925.0 L957.5 911.7 L957.5 861.2 L957.6 889.7 L957.8 816.4 L958.0 871.5 L958.0 855.6 L958.1 814.0 L958.4 925.0 L958.5 830.6 L958.5 813.6 L958.8 806.7 L958.9 894.5 L959.0 861.1 L959.0 829.5 L959.1 913.3 L959.2 804.0 L959.5 833.5 L959.5 859.8 L959.5 872.4 L959.7 788.8 L960.0 788.3 L960.0 802.7 L960.0 819.8 L960.3 925.0 L960.5 839.1 L960.5 843.7 L960.7 925.0 L960.8 810.7 L961.0 860.2 L961.0 836.2 L961.2 815.0 L961.3 898.8 L961.5 832.8 L961.5 823.3 L961.7 925.0 L961.9 793.9 L962.0 816.7 L962.0 829.1 L962.0 864.4 L962.5 816.1 L962.5 828.6 L962.5 841.6 L962.5 818.0 L962.7 925.0 L963.0 906.6 L963.0 909.4 L963.2 925.0 L963.5 814.0 L963.5 802.4 L963.5 803.5 L963.9 813.8 L964.0 916.2 L964.0 916.2 L964.0 872.4 L964.2 916.5 L964.3 813.9 L964.5 879.5 L964.5 886.5 L964.8 809.6 L965.0 898.4 L965.0 878.8 L965.0 836.5 L965.1 925.0 L965.5 797.4 L965.5 793.8 L965.5 788.0 L965.5 801.4 L965.8 890.1 L966.0 810.0 L966.0 822.5 L966.0 818.0 L966.4 925.0 L966.5 919.6 L966.5 925.0 L966.5 925.0 L966.9 809.0 L967.0 799.4 L967.0 806.1 L967.0 821.4 L967.3 925.0 L967.5 820.7 L967.5 825.7 L967.8 925.0 L968.0 797.5 L968.0 796.6 L968.0 800.7 L968.0 803.7 L968.1 893.3 L968.5 872.9 L968.5 906.9 L968.7 925.0 L968.8 792.0 L969.0 812.9 L969.0 826.1 L969.1 925.0 L969.2 804.8 L969.5 838.0 L969.5 843.1 L969.7 900.3 L969.7 803.0 L970.0 798.3 L970.0 792.0 L970.0 808.7 L970.5 925.0 L970.5 925.0 L970.5 884.4 L970.7 805.0 L971.0 909.3 L971.0 862.9 L971.0 836.7 L971.2 925.0 L971.5 797.3 L971.5 893.0 L971.5 851.0 L971.5 799.9 L971.8 925.0 L972.0 807.8 L972.0 823.8 L972.2 803.1 L972.3 925.0 L972.5 860.1 L972.5 845.4 L972.8 925.0 L973.0 801.2 L973.0 805.0 L973.0 827.6 L973.2 890.1 L973.4 811.4 L973.5 847.8 L973.5 824.9 L973.6 801.0 L974.0 903.6 L974.0 829.3 L974.0 807.1 L974.0 805.8 L974.1 925.0 L974.5 824.2 L974.5 815.0 L974.8 906.1 L975.0 416.9 L975.0 416.9 L975.0 428.0 L975.0 428.0 L975.5 925.0 L975.5 873.3 L975.5 870.2 L975.8 917.9 L975.9 802.8 L976.0 915.3 L976.0 833.5 L976.0 790.4 L976.4 925.0 L976.5 809.0 L976.5 821.1 L976.7 925.0 L976.8 813.1 L977.0 850.6 L977.0 820.4 L977.0 795.8 L977.2 902.8 L977.5 813.9 L977.5 808.5 L977.5 816.0 L977.7 925.0 L978.0 823.4 L978.0 818.6 L978.3 818.3 L978.3 925.0 L978.5 853.8 L978.5 868.5 L978.6 800.4 L979.0 904.7 L979.0 871.7 L979.0 867.6 L979.3 897.7 L979.3 807.8 L979.5 854.9 L979.5 834.9 L979.6 803.3 L979.7 913.4 L980.0 842.8 L980.0 870.1 L980.1 925.0 L980.4 809.3 L980.5 805.7 L980.5 803.1 L980.7 856.9 L981.0 787.7 L981.0 822.5 L981.0 856.8 L981.2 804.2 L981.4 918.1 L981.5 825.0 L981.5 828.2 L981.6 805.9 L981.7 912.0 L982.0 834.2 L982.0 862.5 L982.0 925.0 L982.1 795.1 L982.5 863.7 L982.5 878.4 L982.5 814.5 L982.7 908.1 L983.0 876.0 L983.0 850.4 L983.0 925.0 L983.1 814.7 L983.5 816.7 L983.5 818.2 L983.8 925.0 L983.9 793.4 L984.0 863.9 L984.0 886.0 L984.0 908.2 L984.5 815.7 L984.5 808.5 L984.5 800.0 L984.5 806.6 L984.8 925.0 L985.0 855.9 L985.0 853.3 L985.1 925.0 L985.1 790.5 L985.5 808.3 L985.5 805.8 L985.6 806.9 L985.6 925.0 L986.0 827.1 L986.0 811.9 L986.4 813.0 L986.5 898.8 L986.5 838.9 L986.5 837.7 L986.6 800.1 L986.8 904.5 L987.0 822.5 L987.0 840.5 L987.2 812.3 L987.4 925.0 L987.5 854.1 L987.5 847.9 L987.8 925.0 L987.9 799.7 L988.0 913.0 L988.0 899.0 L988.2 925.0 L988.4 807.3 L988.5 862.5 L988.5 872.9 L988.5 880.0 L989.0 801.4 L989.0 811.4 L989.0 805.9 L989.0 803.7 L989.2 925.0 L989.5 917.7 L989.5 887.6 L989.7 805.6 L989.9 923.0 L990.0 890.1 L990.0 901.8 L990.1 807.8 L990.2 925.0 L990.5 827.5 L990.5 825.3 L990.6 818.9 L990.7 912.7 L991.0 816.7 L991.0 824.0 L991.0 809.2 L991.4 925.0 L991.5 842.6 L991.5 869.3 L991.7 925.0 L992.0 806.5 L992.0 833.0 L992.0 827.8 L992.2 925.0 L992.5 807.7 L992.5 795.6 L992.5 790.1 L992.6 925.0 L992.8 798.7 L993.0 903.2 L993.0 870.5 L993.1 817.9 L993.3 925.0 L993.5 839.9 L993.5 826.5 L993.8 807.5 L993.9 890.5 L994.0 886.9 L994.0 902.7 L994.2 808.8 L994.5 923.2 L994.5 923.2 L994.5 853.9 L994.6 804.7 L994.8 907.1 L995.0 815.7 L995.0 799.9 L995.0 815.1 L995.4 922.5 L995.5 804.1 L995.5 799.6 L995.5 907.7 L995.8 800.3 L996.0 839.0 L996.0 855.2 L996.2 417.7 L996.3 925.0 L996.5 839.4 L996.5 825.2 L996.6 783.6 L997.0 909.0 L997.0 856.4 L997.0 889.2 L997.1 925.0 L997.4 803.4 L997.5 858.7 L997.5 861.0 L997.6 808.8 L998.0 890.3 L998.0 865.4 L998.0 830.9 L998.1 810.8 L998.4 925.0 L998.5 825.0 L998.5 834.2 L998.8 808.4 L998.8 900.2 L999.0 825.0 L999.0 808.2 L999.1 925.0 L999.2 805.2 L999.5 916.1 L999.5 881.9 L999.6 925.0 L1000.0 808.6 L1000.0 818.3 L1000.0 836.9 L1000.1 925.0 L1000.3 800.2 L1000.5 882.3 L1000.5 897.3 L1000.7 807.9 L1000.8 919.0 L1001.0 864.3 L1001.0 844.3 L1001.0 916.4 L1001.3 794.5 L1001.5 827.6 L1001.5 841.2 L1001.7 925.0 L1001.9 802.2 L1002.0 846.8 L1002.0 857.7 L1002.2 800.3 L1002.3 925.0 L1002.5 855.2 L1002.5 856.8 L1002.9 801.1 L1002.9 925.0 L1003.0 856.3 L1003.0 865.5 L1003.1 810.8 L1003.1 925.0 L1003.5 925.0 L1003.5 899.4 L1003.5 925.0 L1003.8 816.2 L1004.0 868.0 L1004.0 832.6 L1004.1 925.0 L1004.2 794.1 L1004.5 830.6 L1004.5 837.8 L1004.5 925.0 L1004.7 803.1 L1005.0 842.5 L1005.0 839.4 L1005.2 782.6 L1005.3 925.0 L1005.5 823.1 L1005.5 842.2 L1005.5 925.0 L1005.7 813.0 L1006.0 844.1 L1006.0 843.1 L1006.3 925.0 L1006.5 795.4 L1006.5 778.2 L1006.5 786.5 L1006.5 800.9 L1006.6 925.0 L1007.0 825.1 L1007.0 830.3 L1007.1 925.0 L1007.3 810.7 L1007.5 804.5 L1007.5 805.1 L1007.8 920.1 L1008.0 803.4 L1008.0 815.8 L1008.0 844.5 L1008.2 925.0 L1008.3 822.4 L1008.5 839.6 L1008.5 848.9 L1008.6 811.3 L1008.7 925.0 L1009.0 877.3 L1009.0 893.5 L1009.0 925.0 L1009.5 804.3 L1009.5 833.6 L1009.5 846.4 L1009.9 887.3 L1009.9 792.5 L1010.0 826.4 L1010.0 827.7 L1010.2 925.0 L1010.5 805.7 L1010.5 862.8 L1010.5 871.5 L1010.6 925.0 L1010.9 798.0 L1011.0 807.1 L1011.0 828.3 L1011.2 798.6 L1011.5 883.2 L1011.5 883.2 L1011.5 925.0 L1011.5 925.0 L1011.7 802.0 L1012.0 813.2 L1012.0 852.6 L1012.0 817.5 L1012.2 925.0 L1012.5 839.6 L1012.5 820.3 L1012.5 925.0 L1012.9 811.1 L1013.0 813.4 L1013.0 805.3 L1013.2 925.0 L1013.4 807.1 L1013.5 816.1 L1013.5 829.7 L1013.7 813.7 L1013.8 910.5 L1014.0 835.6 L1014.0 849.7 L1014.3 896.3 L1014.4 808.8 L1014.5 846.5 L1014.5 822.4 L1014.5 808.7 L1014.9 925.0 L1015.0 821.0 L1015.0 831.6 L1015.2 925.0 L1015.5 819.3 L1015.5 822.0 L1015.5 802.5 L1015.5 802.3 L1015.6 925.0 L1016.0 838.8 L1016.0 842.0 L1016.2 897.2 L1016.4 811.3 L1016.5 806.3 L1016.5 815.2 L1016.7 809.9 L1017.0 925.0 L1017.0 839.3 L1017.0 820.9 L1017.2 925.0 L1017.4 418.9 L1017.5 857.6 L1017.5 839.1 L1017.7 925.0 L1017.8 795.1 L1018.0 883.7 L1018.0 925.0 L1018.0 925.0 L1018.1 799.8 L1018.5 827.8 L1018.5 830.6 L1018.7 925.0 L1018.7 800.0 L1019.0 839.6 L1019.0 861.6 L1019.2 806.6 L1019.4 925.0 L1019.5 822.0 L1019.5 832.4 L1019.5 801.4 L1019.5 925.0 L1020.0 820.7 L1020.0 836.1 L1020.1 799.1 L1020.1 899.1 L1020.5 848.4 L1020.5 856.6 L1020.8 800.2 L1020.9 925.0 L1021.0 862.2 L1021.0 869.7 L1021.0 925.0 L1021.4 818.9 L1021.5 862.5 L1021.5 918.1 L1021.7 816.3 L1021.9 925.0 L1022.0 842.0 L1022.0 820.2 L1022.3 925.0 L1022.5 806.0 L1022.5 797.3 L1022.5 816.7 L1022.7 899.8 L1022.9 818.6 L1023.0 823.3 L1023.0 802.4 L1023.1 810.9 L1023.2 925.0 L1023.5 830.0 L1023.5 806.8 L1023.7 925.0 L1023.8 812.6 L1024.0 827.0 L1024.0 824.9 L1024.0 816.8 L1024.3 925.0 L1024.5 828.6 L1024.5 836.1 L1024.6 925.0 L1025.0 810.8 L1025.0 813.8 L1025.0 806.9 L1025.4 925.0 L1025.5 815.7 L1025.5 823.0 L1025.5 810.7 L1025.8 806.7 L1025.9 921.3 L1026.0 880.6 L1026.0 846.9 L1026.4 925.0 L1026.4 811.3 L1026.5 838.4 L1026.5 900.6 L1026.5 925.0 L1026.8 801.3 L1027.0 834.5 L1027.0 872.1 L1027.3 925.0 L1027.5 810.6 L1027.5 812.0 L1027.5 835.3 L1027.6 797.0 L1027.8 925.0 L1028.0 859.9 L1028.0 841.3 L1028.2 925.0 L1028.3 812.1 L1028.5 857.2 L1028.5 841.0 L1028.8 797.6 L1028.9 912.1 L1029.0 830.9 L1029.0 825.6 L1029.2 925.0 L1029.4 814.0 L1029.5 841.6 L1029.5 829.5 L1029.6 925.0 L1029.6 813.0 L1030.0 834.8 L1030.0 830.3 L1030.0 925.0 L1030.1 802.0 L1030.5 797.2 L1030.5 809.9 L1030.6 925.0 L1030.7 813.7 L1031.0 856.9 L1031.0 855.0 L1031.1 808.8 L1031.3 925.0 L1031.5 823.8 L1031.5 846.8 L1031.6 803.7 L1031.8 925.0 L1032.0 853.1 L1032.0 859.3 L1032.2 925.0 L1032.5 811.3 L1032.5 872.2 L1032.5 863.2 L1032.5 925.0 L1032.8 812.7 L1033.0 851.1 L1033.0 832.8 L1033.0 811.3 L1033.1 925.0 L1033.5 845.0 L1033.5 828.0 L1033.6 925.0 L1034.0 809.6 L1034.0 925.0 L1034.0 875.6 L1034.0 925.0 L1034.1 796.7 L1034.5 873.2 L1034.5 842.4 L1034.6 925.0 L1034.9 797.1 L1035.0 807.3 L1035.0 827.4 L1035.0 814.1 L1035.0 925.0 L1035.5 866.3 L1035.5 845.0 L1035.6 897.6 L1035.7 791.2 L1036.0 838.0 L1036.0 825.1 L1036.1 800.1 L1036.1 919.3 L1036.5 849.1 L1036.5 838.8 L1036.7 812.2 L1036.7 925.0 L1037.0 843.6 L1037.0 850.0 L1037.1 798.9 L1037.2 925.0 L1037.5 864.4 L1037.5 897.3 L1037.5 814.9 L1037.7 924.3 L1038.0 841.6 L1038.0 878.9 L1038.3 925.0 L1038.5 523.4 L1038.5 523.4 L1038.5 464.9 L1038.5 420.0 L1038.8 889.9 L1039.0 847.5 L1039.0 851.8 L1039.1 925.0 L1039.4 810.8 L1039.5 803.2 L1039.5 802.2 L1039.7 803.1 L1039.7 925.0 L1040.0 911.8 L1040.0 860.2 L1040.1 925.0 L1040.2 809.2 L1040.5 827.1 L1040.5 825.2 L1040.6 810.0 L1040.7 925.0 L1041.0 873.4 L1041.0 869.3 L1041.3 915.0 L1041.3 809.0 L1041.5 820.4 L1041.5 813.2 L1041.7 925.0 L1041.8 814.5 L1042.0 857.6 L1042.0 852.2 L1042.4 911.7 L1042.5 799.7 L1042.5 820.2 L1042.5 825.0 L1042.6 925.0 L1042.8 811.9 L1043.0 815.1 L1043.0 812.7 L1043.0 809.5 L1043.3 925.0 L1043.5 846.2 L1043.5 884.5 L1043.6 916.1 L1043.7 799.6 L1044.0 840.3 L1044.0 840.6 L1044.3 925.0 L1044.5 805.0 L1044.5 832.1 L1044.5 880.3 L1044.7 925.0 L1044.8 803.3 L1045.0 832.3 L1045.0 848.0 L1045.3 812.2 L1045.5 925.0 L1045.5 890.1 L1045.5 899.0 L1045.7 925.0 L1046.0 806.2 L1046.0 856.3 L1046.0 836.9 L1046.1 925.0 L1046.4 803.1 L1046.5 810.5 L1046.5 832.5 L1046.6 925.0 L1046.6 802.1 L1047.0 815.6 L1047.0 830.8 L1047.3 792.0 L1047.4 925.0 L1047.5 856.3 L1047.5 925.0 L1047.5 925.0 L1047.6 800.7 L1048.0 825.9 L1048.0 865.0 L1048.0 925.0 L1048.4 801.3 L1048.5 849.1 L1048.5 855.4 L1048.6 809.0 L1048.7 925.0 L1049.0 833.7 L1049.0 829.6 L1049.0 805.2 L1049.5 925.0 L1049.5 841.4 L1049.5 819.2 L1049.5 809.2 L1049.8 925.0 L1050.0 879.2 L1050.0 877.0 L1050.0 925.0 L1050.3 800.8 L1050.5 915.0 L1050.5 854.9 L1050.5 925.0 L1050.9 800.8 L1051.0 829.9 L1051.0 828.8 L1051.4 925.0 L1051.4 813.4 L1051.5 925.0 L1051.5 902.9 L1051.6 925.0 L1051.7 799.4 L1052.0 896.1 L1052.0 859.5 L1052.0 925.0 L1052.2 810.7 L1052.5 843.9 L1052.5 837.3 L1052.5 803.6 L1052.9 908.2 L1053.0 792.9 L1053.0 798.6 L1053.1 925.0 L1053.4 805.2 L1053.5 845.3 L1053.5 830.5 L1053.7 925.0 L1053.8 806.9 L1054.0 820.4 L1054.0 867.7 L1054.2 925.0 L1054.4 817.3 L1054.5 820.8 L1054.5 817.5 L1054.7 799.6 L1055.0 915.3 L1055.0 842.3 L1055.0 833.0 L1055.0 925.0 L1055.1 798.2 L1055.5 884.4 L1055.5 925.0 L1055.5 925.0 L1055.9 797.7 L1056.0 828.9 L1056.0 847.2 L1056.1 925.0 L1056.3 804.7 L1056.5 850.0 L1056.5 838.0 L1056.7 925.0 L1057.0 812.3 L1057.0 864.1 L1057.0 925.0 L1057.0 925.0 L1057.3 805.9 L1057.5 879.9 L1057.5 925.0 L1057.5 925.0 L1057.6 809.9 L1058.0 828.6 L1058.0 840.8 L1058.0 925.0 L1058.1 821.2 L1058.5 822.6 L1058.5 827.7 L1058.6 925.0 L1058.6 810.5 L1059.0 841.5 L1059.0 845.1 L1059.2 925.0 L1059.5 795.8 L1059.5 819.9 L1059.5 810.2 L1059.7 421.7 L1059.8 919.6 L1060.0 830.1 L1060.0 838.8 L1060.1 919.3 L1060.3 804.7 L1060.5 846.1 L1060.5 843.6 L1060.6 925.0 L1061.0 808.3 L1061.0 801.5 L1061.0 833.8 L1061.0 925.0 L1061.1 810.8 L1061.5 838.6 L1061.5 841.6 L1061.7 812.8 L1061.9 925.0 L1062.0 823.6 L1062.0 837.0 L1062.1 925.0 L1062.4 808.4 L1062.5 830.6 L1062.5 825.5 L1062.7 925.0 L1062.8 807.3 L1063.0 855.6 L1063.0 860.7 L1063.0 925.0 L1063.2 805.1 L1063.5 876.8 L1063.5 876.8 L1063.8 925.0 L1063.9 810.0 L1064.0 860.7 L1064.0 872.0 L1064.1 925.0 L1064.2 811.7 L1064.5 851.6 L1064.5 837.8 L1064.5 804.8 L1064.6 925.0 L1065.0 805.3 L1065.0 802.2 L1065.1 809.1 L1065.3 925.0 L1065.5 814.8 L1065.5 812.2 L1065.8 807.2 L1065.9 925.0 L1066.0 900.9 L1066.0 868.2 L1066.1 925.0 L1066.3 794.7 L1066.5 816.3 L1066.5 816.6 L1066.7 925.0 L1066.8 808.8 L1067.0 889.9 L1067.0 877.3 L1067.3 798.4 L1067.4 925.0 L1067.5 830.2 L1067.5 825.3 L1067.6 925.0 L1067.9 811.2 L1068.0 816.3 L1068.0 838.0 L1068.0 925.0 L1068.3 796.4 L1068.5 853.7 L1068.5 852.8 L1068.7 925.0 L1068.8 803.1 L1069.0 809.7 L1069.0 839.1 L1069.0 925.0 L1069.4 799.7 L1069.5 833.1 L1069.5 827.2 L1069.9 792.2 L1069.9 925.0 L1070.0 873.1 L1070.0 860.6 L1070.2 803.6 L1070.4 925.0 L1070.5 832.1 L1070.5 821.1 L1070.6 925.0 L1070.7 789.9 L1071.0 812.2 L1071.0 810.8 L1071.5 925.0 L1071.5 806.2 L1071.5 880.0 L1071.5 875.2 L1071.8 925.0 L1072.0 814.2 L1072.0 852.9 L1072.0 865.9 L1072.1 925.0 L1072.3 803.7 L1072.5 835.9 L1072.5 834.6 L1072.6 925.0 L1073.0 805.3 L1073.0 806.6 L1073.0 796.0 L1073.1 925.0 L1073.3 798.3 L1073.5 836.3 L1073.5 850.2 L1073.5 925.0 L1073.8 805.3 L1074.0 826.0 L1074.0 840.9 L1074.0 925.0 L1074.4 788.1 L1074.5 856.6 L1074.5 874.8 L1074.5 925.0 L1074.7 798.6 L1075.0 847.3 L1075.0 822.4 L1075.3 925.0 L1075.5 810.8 L1075.5 837.1 L1075.5 815.8 L1075.5 802.1 L1075.9 925.0 L1076.0 857.3 L1076.0 851.4 L1076.0 925.0 L1076.1 809.5 L1076.5 810.9 L1076.5 819.4 L1076.6 925.0 L1076.7 812.7 L1077.0 861.5 L1077.0 830.0 L1077.1 925.0 L1077.3 811.7 L1077.5 832.1 L1077.5 863.7 L1077.8 925.0 L1078.0 804.3 L1078.0 820.9 L1078.0 816.7 L1078.0 925.0 L1078.2 800.6 L1078.5 834.3 L1078.5 860.4 L1078.7 925.0 L1078.8 794.9 L1079.0 815.0 L1079.0 816.5 L1079.0 925.0 L1079.2 809.3 L1079.5 867.4 L1079.5 857.2 L1079.6 821.0 L1079.7 925.0 L1080.0 829.8 L1080.0 853.9 L1080.0 925.0 L1080.3 816.1 L1080.5 822.6 L1080.5 824.8 L1080.8 925.0 L1080.9 424.2 L1081.0 826.4 L1081.0 819.0 L1081.3 925.0 L1081.4 808.9 L1081.5 808.7 L1081.5 800.0 L1081.6 924.9 L1081.8 795.0 L1082.0 807.0 L1082.0 820.0 L1082.2 925.0 L1082.3 809.5 L1082.5 840.4 L1082.5 849.4 L1082.5 925.0 L1082.8 815.0 L1083.0 883.9 L1083.0 861.3 L1083.3 798.8 L1083.4 925.0 L1083.5 876.9 L1083.5 836.9 L1083.6 925.0 L1083.6 807.5 L1084.0 870.2 L1084.0 864.6 L1084.2 802.4 L1084.3 925.0 L1084.5 822.1 L1084.5 819.5 L1084.5 925.0 L1084.8 809.6 L1085.0 873.2 L1085.0 925.0 L1085.0 925.0 L1085.2 797.3 L1085.5 849.1 L1085.5 828.5 L1085.6 925.0 L1085.9 818.8 L1086.0 917.1 L1086.0 903.6 L1086.4 810.6 L1086.4 925.0 L1086.5 831.7 L1086.5 840.8 L1086.5 925.0 L1086.9 803.0 L1087.0 842.0 L1087.0 832.1 L1087.3 925.0 L1087.5 802.1 L1087.5 829.6 L1087.5 830.5 L1087.5 805.7 L1087.5 925.0 L1088.0 841.3 L1088.0 826.4 L1088.1 925.0 L1088.4 798.1 L1088.5 883.1 L1088.5 879.4 L1088.7 925.0 L1088.9 804.8 L1089.0 853.1 L1089.0 833.4 L1089.2 798.0 L1089.2 925.0 L1089.5 841.5 L1089.5 830.3 L1089.6 809.8 L1089.7 925.0 L1090.0 828.3 L1090.0 820.0 L1090.1 925.0 L1090.2 807.5 L1090.5 808.4 L1090.5 805.3 L1090.8 795.3 L1090.8 925.0 L1091.0 856.2 L1091.0 834.0 L1091.1 925.0 L1091.4 798.8 L1091.5 832.2 L1091.5 813.1 L1091.6 925.0 L1091.9 797.6 L1092.0 813.8 L1092.0 811.2 L1092.1 925.0 L1092.4 814.0 L1092.5 815.1 L1092.5 810.1 L1092.9 808.2 L1092.9 925.0 L1093.0 823.7 L1093.0 830.5 L1093.2 925.0 L1093.3 805.6 L1093.5 830.4 L1093.5 829.2 L1093.6 925.0 L1093.7 808.4 L1094.0 844.1 L1094.0 875.9 L1094.3 925.0 L1094.3 802.1 L1094.5 925.0 L1094.5 858.8 L1094.8 800.9 L1094.9 925.0 L1095.0 818.3 L1095.0 828.4 L1095.4 810.5 L1095.5 925.0 L1095.5 860.3 L1095.5 869.7 L1095.5 925.0 L1095.6 805.2 L1096.0 889.7 L1096.0 871.5 L1096.0 925.0 L1096.4 802.2 L1096.5 863.9 L1096.5 888.2 L1096.6 925.0 L1097.0 816.1 L1097.0 925.0 L1097.0 856.7 L1097.2 925.0 L1097.3 817.8 L1097.5 864.6 L1097.5 839.8 L1097.6 799.4 L1097.8 916.7 L1098.0 835.8 L1098.0 924.9 L1098.2 805.4 L1098.2 925.0 L1098.5 878.2 L1098.5 861.7 L1098.8 925.0 L1099.0 800.8 L1099.0 863.6 L1099.0 876.9 L1099.2 925.0 L1099.3 809.0 L1099.5 873.7 L1099.5 845.5 L1099.7 925.0 L1099.7 801.2 L1100.0 812.7 L1100.0 798.4 L1100.2 807.0 L1100.2 925.0 L1100.5 899.8 L1100.5 907.0 L1100.6 925.0 L1100.9 796.5 L1101.0 878.3 L1101.0 925.0 L1101.0 925.0 L1101.0 804.6 L1101.5 824.1 L1101.5 804.8 L1101.6 925.0 L1101.9 807.6 L1102.0 812.1 L1102.0 804.4 L1102.1 427.0 L1102.1 925.0 L1102.5 875.0 L1102.5 859.9 L1102.6 925.0 L1102.9 796.7 L1103.0 859.5 L1103.0 829.7 L1103.0 803.1 L1103.1 925.0 L1103.5 862.3 L1103.5 853.7 L1103.5 925.0 L1103.7 805.9 L1104.0 831.8 L1104.0 825.4 L1104.0 923.0 L1104.4 805.8 L1104.5 835.3 L1104.5 832.5 L1104.7 801.6 L1104.9 925.0 L1105.0 865.2 L1105.0 883.1 L1105.0 925.0 L1105.0 800.3 L1105.5 867.0 L1105.5 843.4 L1105.6 925.0 L1105.7 805.3 L1106.0 898.0 L1106.0 850.4 L1106.1 925.0 L1106.1 815.0 L1106.5 829.3 L1106.5 837.2 L1106.5 925.0 L1106.9 808.4 L1107.0 813.4 L1107.0 801.4 L1107.0 925.0 L1107.4 812.5 L1107.5 849.8 L1107.5 896.6 L1107.5 925.0 L1107.6 803.7 L1108.0 889.6 L1108.0 910.3 L1108.0 925.0 L1108.1 803.0 L1108.5 852.4 L1108.5 841.0 L1108.5 925.0 L1108.6 789.2 L1109.0 897.6 L1109.0 917.3 L1109.0 925.0 L1109.3 801.2 L1109.5 834.3 L1109.5 833.3 L1109.7 807.7 L1110.0 925.0 L1110.0 834.1 L1110.0 806.8 L1110.2 925.0 L1110.3 806.7 L1110.5 812.3 L1110.5 865.2 L1110.6 811.7 L1110.8 925.0 L1111.0 828.9 L1111.0 819.9 L1111.0 925.0 L1111.5 804.4 L1111.5 919.5 L1111.5 883.8 L1111.6 925.0 L1111.7 815.3 L1112.0 865.5 L1112.0 865.2 L1112.0 925.0 L1112.3 805.8 L1112.5 874.9 L1112.5 849.0 L1112.6 800.3 L1112.7 925.0 L1113.0 826.4 L1113.0 833.9 L1113.1 925.0 L1113.2 805.3 L1113.5 805.4 L1113.5 811.8 L1113.6 793.6 L1113.7 925.0 L1114.0 822.0 L1114.0 831.6 L1114.0 925.0 L1114.3 799.7 L1114.5 838.4 L1114.5 827.7 L1114.5 802.4 L1114.6 925.0 L1115.0 887.0 L1115.0 865.3 L1115.0 806.5 L1115.1 925.0 L1115.5 862.0 L1115.5 859.2 L1115.6 925.0 L1116.0 806.5 L1116.0 799.1 L1116.0 805.6 L1116.1 925.0 L1116.3 805.7 L1116.5 914.6 L1116.5 874.9 L1116.6 925.0 L1116.9 807.4 L1117.0 857.1 L1117.0 837.2 L1117.0 925.0 L1117.2 802.8 L1117.5 891.1 L1117.5 915.5 L1117.5 925.0 L1117.8 806.9 L1118.0 825.5 L1118.0 804.0 L1118.3 925.0 L1118.3 800.3 L1118.5 861.0 L1118.5 851.7 L1118.5 925.0 L1118.6 810.2 L1119.0 841.8 L1119.0 864.2 L1119.1 925.0 L1119.5 803.6 L1119.5 807.1 L1119.5 797.3 L1119.6 925.0 L1119.9 803.8 L1120.0 812.9 L1120.0 840.4 L1120.1 925.0 L1120.5 805.2 L1120.5 862.4 L1120.5 848.3 L1120.7 925.0 L1120.9 817.7 L1121.0 850.7 L1121.0 859.5 L1121.1 806.2 L1121.3 925.0 L1121.5 925.0 L1121.5 925.0 L1121.5 925.0 L1121.6 806.9 L1122.0 822.7 L1122.0 806.3 L1122.0 804.8 L1122.1 925.0 L1122.5 858.2 L1122.5 874.9 L1122.6 925.0 L1122.7 815.3 L1123.0 884.0 L1123.0 843.5 L1123.1 925.0 L1123.2 430.7 L1123.5 867.3 L1123.5 925.0 L1123.5 925.0 L1123.9 801.6 L1124.0 854.0 L1124.0 846.9 L1124.1 925.0 L1124.2 787.2 L1124.5 814.3 L1124.5 809.0 L1124.6 925.0 L1124.7 799.6 L1125.0 855.9 L1125.0 847.4 L1125.1 925.0 L1125.4 801.4 L1125.5 831.8 L1125.5 832.5 L1125.6 925.0 L1125.7 806.9 L1126.0 920.9 L1126.0 886.9 L1126.2 809.5 L1126.2 925.0 L1126.5 878.4 L1126.5 857.9 L1126.6 925.0 L1126.8 806.0 L1127.0 823.5 L1127.0 818.3 L1127.2 809.4 L1127.3 925.0 L1127.5 869.7 L1127.5 860.2 L1127.6 925.0 L1127.9 793.1 L1128.0 904.4 L1128.0 874.8 L1128.1 925.0 L1128.4 808.5 L1128.5 835.9 L1128.5 837.3 L1128.6 801.1 L1128.6 925.0 L1129.0 826.0 L1129.0 821.0 L1129.1 925.0 L1129.4 811.7 L1129.5 828.7 L1129.5 837.5 L1129.8 925.0 L1129.9 796.2 L1130.0 831.1 L1130.0 854.6 L1130.1 925.0 L1130.1 805.7 L1130.5 851.8 L1130.5 906.5 L1130.5 925.0 L1130.6 802.6 L1131.0 861.6 L1131.0 878.7 L1131.0 925.0 L1131.1 807.9 L1131.5 806.9 L1131.5 803.6 L1131.5 917.9 L1131.6 794.5 L1132.0 820.1 L1132.0 828.0 L1132.2 810.5 L1132.2 925.0 L1132.5 857.7 L1132.5 846.5 L1132.6 925.0 L1132.8 802.3 L1133.0 827.2 L1133.0 822.0 L1133.3 925.0 L1133.3 817.1 L1133.5 864.5 L1133.5 893.0 L1133.6 794.6 L1133.6 925.0 L1134.0 848.2 L1134.0 862.4 L1134.1 925.0 L1134.2 812.3 L1134.5 840.5 L1134.5 844.9 L1134.5 925.0 L1134.9 810.0 L1135.0 847.1 L1135.0 823.6 L1135.1 925.0 L1135.3 797.2 L1135.5 803.4 L1135.5 804.9 L1135.6 925.0 L1135.8 805.1 L1136.0 807.2 L1136.0 813.2 L1136.0 925.0 L1136.1 798.1 L1136.5 832.7 L1136.5 833.7 L1136.5 925.0 L1136.5 807.9 L1137.0 855.2 L1137.0 854.6 L1137.1 925.0 L1137.5 798.8 L1137.5 847.1 L1137.5 875.2 L1137.5 925.0 L1137.8 810.5 L1138.0 832.7 L1138.0 848.4 L1138.2 925.0 L1138.5 800.2 L1138.5 876.1 L1138.5 873.9 L1138.5 925.0 L1138.7 801.5 L1139.0 836.2 L1139.0 838.2 L1139.0 925.0 L1139.1 809.8 L1139.5 840.8 L1139.5 836.2 L1139.5 925.0 L1139.8 808.8 L1140.0 875.5 L1140.0 872.2 L1140.0 925.0 L1140.5 812.7 L1140.5 864.1 L1140.5 925.0 L1140.5 925.0 L1140.9 802.7 L1141.0 874.2 L1141.0 841.9 L1141.1 796.1 L1141.2 925.0 L1141.5 859.0 L1141.5 871.8 L1141.5 925.0 L1141.7 807.6 L1142.0 888.7 L1142.0 845.5 L1142.0 925.0 L1142.1 806.1 L1142.5 852.4 L1142.5 866.5 L1142.6 925.0 L1143.0 812.7 L1143.0 859.2 L1143.0 831.0 L1143.0 925.0 L1143.4 799.4 L1143.5 841.1 L1143.5 841.4 L1143.5 925.0 L1143.9 795.2 L1144.0 873.5 L1144.0 864.1 L1144.1 925.0 L1144.4 434.6 L1144.5 842.8 L1144.5 839.1 L1144.5 925.0 L1144.7 807.5 L1145.0 827.3 L1145.0 825.9 L1145.0 925.0 L1145.3 799.8 L1145.5 870.8 L1145.5 880.9 L1145.5 925.0 L1145.8 801.6 L1146.0 902.6 L1146.0 848.6 L1146.3 801.4 L1146.4 925.0 L1146.5 886.8 L1146.5 845.1 L1146.5 925.0 L1146.8 805.5 L1147.0 850.4 L1147.0 842.2 L1147.0 919.7 L1147.3 814.6 L1147.5 887.2 L1147.5 898.2 L1147.5 925.0 L1147.8 792.0 L1148.0 860.5 L1148.0 870.7 L1148.1 925.0 L1148.5 807.7 L1148.5 888.4 L1148.5 925.0 L1148.5 925.0 L1148.5 802.6 L1149.0 838.5 L1149.0 876.1 L1149.0 925.0 L1149.2 798.6 L1149.5 865.7 L1149.5 883.7 L1149.5 925.0 L1149.6 805.0 L1150.0 822.9 L1150.0 840.3 L1150.1 925.0 L1150.2 808.8 L1150.5 855.1 L1150.5 920.3 L1150.6 925.0 L1150.7 796.8 L1151.0 855.8 L1151.0 840.4 L1151.2 925.0 L1151.5 810.8 L1151.5 838.7 L1151.5 874.6 L1151.5 803.3 L1151.6 925.0 L1152.0 859.4 L1152.0 850.3 L1152.2 810.2 L1152.4 925.0 L1152.5 845.6 L1152.5 845.6 L1152.5 809.2 L1152.7 925.0 L1153.0 852.0 L1153.0 886.3 L1153.1 925.0 L1153.3 810.0 L1153.5 883.3 L1153.5 846.3 L1153.7 925.0 L1153.7 812.8 L1154.0 837.2 L1154.0 838.4 L1154.0 925.0 L1154.1 800.3 L1154.5 837.6 L1154.5 858.8 L1154.7 925.0 L1154.7 791.3 L1155.0 835.4 L1155.0 824.3 L1155.0 925.0 L1155.3 809.6 L1155.5 868.1 L1155.5 854.1 L1155.6 790.2 L1155.9 925.0 L1156.0 851.8 L1156.0 825.2 L1156.1 811.5 L1156.2 925.0 L1156.5 841.4 L1156.5 831.6 L1156.5 925.0 L1156.7 800.3 L1157.0 828.4 L1157.0 838.3 L1157.1 925.0 L1157.2 795.2 L1157.5 799.1 L1157.5 801.8 L1157.6 925.0 L1157.7 790.8 L1158.0 819.6 L1158.0 814.7 L1158.1 807.7 L1158.2 925.0 L1158.5 864.7 L1158.5 859.7 L1158.7 925.0 L1158.8 801.7 L1159.0 884.4 L1159.0 893.4 L1159.4 806.9 L1159.5 925.0 L1159.5 917.0 L1159.5 849.6 L1159.5 925.0 L1159.8 807.1 L1160.0 831.5 L1160.0 821.4 L1160.1 925.0 L1160.2 805.2 L1160.5 854.7 L1160.5 849.8 L1160.5 925.0 L1161.0 803.4 L1161.0 843.4 L1161.0 838.4 L1161.0 925.0 L1161.3 805.0 L1161.5 841.7 L1161.5 878.1 L1161.5 925.0 L1161.8 797.3 L1162.0 866.2 L1162.0 925.0 L1162.0 925.0 L1162.4 807.5 L1162.5 846.4 L1162.5 846.4 L1162.5 925.0 L1162.7 810.4 L1163.0 906.4 L1163.0 882.9 L1163.1 925.0 L1163.3 800.3 L1163.5 905.5 L1163.5 925.0 L1163.5 925.0 L1163.7 810.0 L1164.0 894.9 L1164.0 865.6 L1164.0 925.0 L1164.2 803.5 L1164.5 839.5 L1164.5 831.6 L1164.5 925.0 L1164.9 794.8 L1165.0 792.5 L1165.0 786.5 L1165.0 803.6 L1165.2 925.0 L1165.5 809.1 L1165.5 811.4 L1165.6 439.4 L1165.6 925.0 L1166.0 845.3 L1166.0 923.2 L1166.0 925.0 L1166.3 806.7 L1166.5 814.4 L1166.5 817.2 L1166.8 802.7 L1166.8 925.0 L1167.0 855.8 L1167.0 925.0 L1167.0 925.0 L1167.3 805.1 L1167.5 870.2 L1167.5 895.3 L1167.6 925.0 L1167.8 816.3 L1168.0 925.0 L1168.0 852.8 L1168.1 802.0 L1168.1 925.0 L1168.5 847.4 L1168.5 863.8 L1168.5 925.0 L1168.6 813.6 L1169.0 836.7 L1169.0 845.6 L1169.1 925.0 L1169.4 801.3 L1169.5 815.1 L1169.5 813.7 L1169.5 925.0 L1169.6 807.8 L1170.0 895.5 L1170.0 925.0 L1170.0 925.0 L1170.1 813.2 L1170.5 847.8 L1170.5 839.6 L1170.5 801.0 L1170.7 925.0 L1171.0 849.7 L1171.0 844.1 L1171.0 925.0 L1171.4 808.9 L1171.5 834.0 L1171.5 823.9 L1171.5 925.0 L1172.0 801.5 L1172.0 822.7 L1172.0 831.4 L1172.2 925.0 L1172.2 796.0 L1172.5 814.7 L1172.5 814.6 L1172.6 800.2 L1172.6 925.0 L1173.0 849.3 L1173.0 855.7 L1173.0 925.0 L1173.2 811.6 L1173.5 860.9 L1173.5 864.3 L1173.5 925.0 L1173.6 807.8 L1174.0 865.6 L1174.0 857.3 L1174.1 808.9 L1174.2 925.0 L1174.5 829.0 L1174.5 849.0 L1174.5 800.9 L1174.7 925.0 L1175.0 828.3 L1175.0 848.8 L1175.0 925.0 L1175.5 808.5 L1175.5 835.0 L1175.5 822.3 L1175.5 925.0 L1176.0 805.9 L1176.0 858.4 L1176.0 875.6 L1176.0 925.0 L1176.2 804.0 L1176.5 834.4 L1176.5 925.0 L1176.5 925.0 L1176.8 811.0 L1177.0 925.0 L1177.0 846.2 L1177.0 925.0 L1177.1 804.3 L1177.5 849.2 L1177.5 880.7 L1177.6 925.0 L1178.0 812.5 L1178.0 857.2 L1178.0 899.8 L1178.1 925.0 L1178.4 803.9 L1178.5 825.8 L1178.5 823.5 L1178.6 801.7 L1178.7 925.0 L1179.0 853.3 L1179.0 846.7 L1179.0 925.0 L1179.4 796.4 L1179.5 821.8 L1179.5 805.0 L1179.5 812.0 L1179.5 925.0 L1180.0 826.0 L1180.0 812.5 L1180.0 925.0 L1180.3 796.0 L1180.5 838.7 L1180.5 843.0 L1180.5 925.0 L1180.8 807.4 L1181.0 902.5 L1181.0 925.0 L1181.0 925.0 L1181.3 808.0 L1181.5 855.8 L1181.5 855.9 L1181.8 805.9 L1181.9 925.0 L1182.0 925.0 L1182.0 894.7 L1182.0 925.0 L1182.2 809.5 L1182.5 872.1 L1182.5 901.2 L1182.5 925.0 L1182.7 798.9 L1183.0 828.7 L1183.0 866.1 L1183.0 925.0 L1183.4 804.0 L1183.5 827.0 L1183.5 830.2 L1183.6 813.8 L1183.7 925.0 L1184.0 837.7 L1184.0 911.4 L1184.1 925.0 L1184.3 811.4 L1184.5 925.0 L1184.5 836.4 L1184.5 925.0 L1184.7 810.8 L1185.0 809.9 L1185.0 815.1 L1185.1 805.8 L1185.1 925.0 L1185.5 821.8 L1185.5 838.4 L1185.6 925.0 L1185.7 800.7 L1186.0 837.6 L1186.0 835.1 L1186.1 925.0 L1186.4 810.6 L1186.5 865.4 L1186.5 855.0 L1186.6 925.0 L1186.7 444.5 L1187.0 847.9 L1187.0 830.9 L1187.1 925.0 L1187.4 802.6 L1187.5 848.4 L1187.5 845.3 L1187.5 925.0 L1187.6 805.1 L1188.0 826.3 L1188.0 828.9 L1188.1 925.0 L1188.3 809.6 L1188.5 870.7 L1188.5 859.4 L1188.5 925.0 L1188.5 806.7 L1189.0 912.6 L1189.0 881.3 L1189.0 925.0 L1189.1 794.7 L1189.5 831.2 L1189.5 829.7 L1189.5 925.0 L1190.0 800.4 L1190.0 876.0 L1190.0 860.7 L1190.0 925.0 L1190.4 801.3 L1190.5 839.9 L1190.5 845.0 L1190.6 925.0 L1190.7 806.7 L1191.0 873.5 L1191.0 925.0 L1191.0 925.0 L1191.3 811.7 L1191.5 836.0 L1191.5 861.6 L1191.6 925.0 L1192.0 807.1 L1192.0 904.3 L1192.0 853.3 L1192.0 925.0 L1192.1 808.6 L1192.5 828.4 L1192.5 830.9 L1192.6 802.2 L1192.7 925.0 L1193.0 834.2 L1193.0 832.0 L1193.1 925.0 L1193.1 806.0 L1193.5 794.9 L1193.5 797.9 L1193.5 925.0 L1193.6 804.9 L1194.0 923.0 L1194.0 883.7 L1194.0 925.0 L1194.3 801.4 L1194.5 844.7 L1194.5 845.9 L1194.6 925.0 L1194.9 795.5 L1195.0 814.9 L1195.0 806.0 L1195.2 800.6 L1195.2 925.0 L1195.5 802.8 L1195.5 806.8 L1195.5 794.7 L1195.6 925.0 L1196.0 823.1 L1196.0 846.4 L1196.0 925.0 L1196.5 801.6 L1196.5 808.6 L1196.5 827.2 L1196.6 807.4 L1196.7 925.0 L1197.0 878.6 L1197.0 832.9 L1197.0 925.0 L1197.1 805.5 L1197.5 902.5 L1197.5 911.7 L1197.5 925.0 L1197.6 805.4 L1198.0 858.0 L1198.0 870.2 L1198.1 810.2 L1198.2 925.0 L1198.5 819.5 L1198.5 808.8 L1198.5 925.0 L1198.6 799.9 L1199.0 823.2 L1199.0 837.9 L1199.1 804.1 L1199.2 925.0 L1199.5 894.5 L1199.5 833.8 L1199.6 925.0 L1199.7 811.1 L1200.0 851.2 L1200.0 826.1 L1200.0 925.0 L1200.1 804.0 L1200.5 925.0 L1200.5 864.2 L1200.5 798.1 L1200.7 925.0 L1201.0 817.5 L1201.0 814.8 L1201.0 925.0 L1201.1 805.2 L1201.5 833.7 L1201.5 883.1 L1201.5 925.0 L1201.8 793.5 L1202.0 834.9 L1202.0 884.4 L1202.1 925.0 L1202.4 803.2 L1202.5 904.3 L1202.5 883.7 L1202.7 925.0 L1202.8 804.3 L1203.0 816.7 L1203.0 824.6 L1203.2 925.0 L1203.3 812.1 L1203.5 830.1 L1203.5 805.0 L1203.5 925.0 L1203.7 801.8 L1204.0 825.2 L1204.0 821.9 L1204.0 925.0 L1204.5 802.9 L1204.5 817.3 L1204.5 826.2 L1204.5 925.0 L1204.6 806.5 L1205.0 899.8 L1205.0 916.0 L1205.0 925.0 L1205.4 805.1 L1205.5 896.0 L1205.5 871.9 L1205.5 925.0 L1206.0 801.6 L1206.0 820.9 L1206.0 834.4 L1206.0 925.0 L1206.4 798.4 L1206.5 817.4 L1206.5 816.0 L1206.6 925.0 L1206.8 804.3 L1207.0 822.1 L1207.0 831.2 L1207.0 925.0 L1207.2 802.9 L1207.5 843.2 L1207.5 844.6 L1207.5 925.0 L1207.9 450.3 L1208.0 843.9 L1208.0 840.6 L1208.0 925.0 L1208.1 790.1 L1208.5 825.9 L1208.5 813.8 L1208.6 925.0 L1208.7 804.6 L1209.0 792.1 L1209.0 802.7 L1209.0 925.0 L1209.2 799.2 L1209.5 858.4 L1209.5 880.0 L1209.6 925.0 L1209.8 799.4 L1210.0 833.3 L1210.0 852.9 L1210.1 925.0 L1210.4 801.2 L1210.5 855.9 L1210.5 838.0 L1210.6 925.0 L1210.8 808.1 L1211.0 854.9 L1211.0 843.2 L1211.0 925.0 L1211.5 809.8 L1211.5 844.5 L1211.5 836.0 L1211.5 925.0 L1211.8 809.6 L1212.0 891.5 L1212.0 859.8 L1212.1 925.0 L1212.5 808.6 L1212.5 869.6 L1212.5 840.7 L1212.5 811.7 L1212.5 925.0 L1213.0 829.6 L1213.0 834.2 L1213.0 925.0 L1213.1 805.2 L1213.5 875.2 L1213.5 844.4 L1213.6 925.0 L1213.8 800.8 L1214.0 854.5 L1214.0 865.8 L1214.2 925.0 L1214.2 808.0 L1214.5 831.3 L1214.5 848.6 L1214.6 925.0 L1214.7 809.7 L1215.0 873.1 L1215.0 858.1 L1215.1 925.0 L1215.1 796.3 L1215.5 821.9 L1215.5 811.6 L1215.6 925.0 L1216.0 803.0 L1216.0 811.8 L1216.0 817.1 L1216.1 794.4 L1216.1 925.0 L1216.5 835.2 L1216.5 832.4 L1216.5 925.0 L1216.9 805.5 L1217.0 858.7 L1217.0 846.4 L1217.1 925.0 L1217.1 803.1 L1217.5 849.2 L1217.5 847.9 L1217.5 925.0 L1217.9 797.2 L1218.0 811.9 L1218.0 817.2 L1218.0 925.0 L1218.3 809.8 L1218.5 833.2 L1218.5 833.7 L1218.6 925.0 L1218.9 807.9 L1219.0 854.1 L1219.0 845.5 L1219.1 925.0 L1219.2 799.7 L1219.5 860.7 L1219.5 835.9 L1219.8 803.4 L1219.9 925.0 L1220.0 862.1 L1220.0 852.4 L1220.0 925.0 L1220.2 792.7 L1220.5 813.6 L1220.5 831.6 L1220.5 925.0 L1220.9 805.8 L1221.0 874.1" fill="none" stroke="#000" stroke-width="2" stroke-linejoin="round"/><path d="M57.0 429.9 L58.0 428.9 L59.0 427.9 L60.0 426.9 L61.0 425.8 L62.0 424.8 L63.0 423.8 L64.0 422.8 L65.0 421.8 L66.0 420.8 L67.0 419.8 L68.0 418.8 L69.0 417.8 L70.0 416.7 L71.0 415.8 L72.0 414.8 L73.0 413.8 L74.0 412.8 L75.0 411.8 L76.0 410.8 L77.0 409.8 L78.0 408.8 L79.0 407.8 L80.0 406.9 L81.0 405.9 L82.0 404.9 L83.0 403.9 L84.0 403.0 L85.0 402.0 L86.0 401.0 L87.0 400.1 L88.0 399.1 L89.0 398.1 L90.0 397.2 L91.0 396.2 L92.0 395.3 L93.0 394.3 L94.0 393.4 L95.0 392.4 L96.0 391.5 L97.0 390.6 L98.0 389.6 L99.0 388.7 L100.0 387.8 L101.0 386.8 L102.0 385.9 L103.0 385.0 L104.0 384.1 L105.0 383.2 L106.0 382.3 L107.0 381.3 L108.0 380.4 L109.0 379.5 L110.0 378.6 L111.0 377.7 L112.0 376.8 L113.0 376.0 L114.0 375.1 L115.0 374.2 L116.0 373.3 L117.0 372.4 L118.0 371.5 L119.0 370.7 L120.0 369.8 L121.0 368.9 L122.0 368.1 L123.0 367.2 L124.0 366.4 L125.0 365.5 L126.0 364.6 L127.0 363.8 L128.0 363.0 L129.0 362.1 L130.0 361.3 L131.0 360.5 L132.0 359.6 L133.0 358.8 L134.0 358.0 L135.0 357.2 L136.0 356.3 L137.0 355.5 L138.0 354.7 L139.0 353.9 L140.0 353.1 L141.0 352.3 L142.0 351.5 L143.0 350.7 L144.0 349.9 L145.0 349.2 L146.0 348.4 L147.0 347.6 L148.0 346.8 L149.0 346.1 L150.0 345.3 L151.0 344.5 L152.0 343.8 L153.0 343.0 L154.0 342.3 L155.0 341.5 L156.0 340.8 L157.0 340.1 L158.0 339.3 L159.0 338.6 L160.0 337.9 L161.0 337.1 L162.0 336.4 L163.0 335.7 L164.0 335.0 L165.0 334.3 L166.0 333.6 L167.0 332.9 L168.0 332.2 L169.0 331.5 L170.0 330.8 L171.0 330.2 L172.0 329.5 L173.0 328.8 L174.0 328.1 L175.0 327.5 L176.0 326.8 L177.0 326.1 L178.0 325.5 L179.0 324.8 L180.0 324.2 L181.0 323.6 L182.0 322.9 L183.0 322.3 L184.0 321.7 L185.0 321.0 L186.0 320.4 L187.0 319.8 L188.0 319.2 L189.0 318.6 L190.0 318.0 L191.0 317.4 L192.0 316.8 L193.0 316.2 L194.0 315.6 L195.0 315.0 L196.0 314.5 L197.0 313.9 L198.0 313.3 L199.0 312.8 L200.0 312.2 L201.0 311.6 L202.0 311.1 L203.0 310.5 L204.0 310.0 L205.0 309.5 L206.0 308.9 L207.0 308.4 L208.0 307.9 L209.0 307.3 L210.0 306.8 L211.0 306.3 L212.0 305.8 L213.0 305.3 L214.0 304.8 L215.0 304.3 L216.0 303.8 L217.0 303.3 L218.0 302.8 L219.0 302.3 L220.0 301.9 L221.0 301.4 L222.0 300.9 L223.0 300.4 L224.0 300.0 L225.0 299.5 L226.0 299.1 L227.0 298.6 L228.0 298.2 L229.0 297.7 L230.0 297.3 L231.0 296.9 L232.0 296.4 L233.0 296.0 L234.0 295.6 L235.0 295.2 L236.0 294.7 L237.0 294.3 L238.0 293.9 L239.0 293.5 L240.0 293.1 L241.0 292.7 L242.0 292.3 L243.0 291.9 L244.0 291.6 L245.0 291.2 L246.0 290.8 L247.0 290.4 L248.0 290.1 L249.0 289.7 L250.0 289.3 L251.0 289.0 L252.0 288.6 L253.0 288.3 L254.0 287.9 L255.0 287.6 L256.0 287.2 L257.0 286.9 L258.0 286.5 L259.0 286.2 L260.0 285.9 L261.0 285.6 L262.0 285.2 L263.0 284.9 L264.0 284.6 L265.0 284.3 L266.0 284.0 L267.0 283.7 L268.0 283.4 L269.0 283.1 L270.0 282.8 L271.0 282.5 L272.0 282.2 L273.0 281.9 L274.0 281.6 L275.0 281.4 L276.0 281.1 L277.0 280.8 L278.0 280.5 L279.0 280.3 L280.0 280.0 L281.0 279.7 L282.0 279.5 L283.0 279.2 L284.0 279.0 L285.0 278.7 L286.0 278.5 L287.0 278.2 L288.0 278.0 L289.0 277.7 L290.0 277.5 L291.0 277.3 L292.0 277.0 L293.0 276.8 L294.0 276.6 L295.0 276.4 L296.0 276.1 L297.0 275.9 L298.0 275.7 L299.0 275.5 L300.0 275.3 L301.0 275.1 L302.0 274.9 L303.0 274.7 L304.0 274.5 L305.0 274.3 L306.0 274.1 L307.0 273.9 L308.0 273.7 L309.0 273.5 L310.0 273.3 L311.0 273.1 L312.0 272.9 L313.0 272.7 L314.0 272.6 L315.0 272.4 L316.0 272.2 L317.0 272.0 L318.0 271.9 L319.0 271.7 L320.0 271.5 L321.0 271.4 L322.0 271.2 L323.0 271.1 L324.0 270.9 L325.0 270.7 L326.0 270.6 L327.0 270.4 L328.0 270.3 L329.0 270.1 L330.0 270.0 L331.0 269.8 L332.0 269.7 L333.0 269.6 L334.0 269.4 L335.0 269.3 L336.0 269.1 L337.0 269.0 L338.0 268.9 L339.0 268.8 L340.0 268.6 L341.0 268.5 L342.0 268.4 L343.0 268.2 L344.0 268.1 L345.0 268.0 L346.0 267.9 L347.0 267.8 L348.0 267.6 L349.0 267.5 L350.0 267.4 L351.0 267.3 L352.0 267.2 L353.0 267.1 L354.0 267.0 L355.0 266.9 L356.0 266.8 L357.0 266.7 L358.0 266.6 L359.0 266.5 L360.0 266.4 L361.0 266.3 L362.0 266.2 L363.0 266.1 L364.0 266.0 L365.0 265.9 L366.0 265.8 L367.0 265.7 L368.0 265.6 L369.0 265.5 L370.0 265.4 L371.0 265.3 L372.0 265.3 L373.0 265.2 L374.0 265.1 L375.0 265.0 L376.0 264.9 L377.0 264.8 L378.0 264.8 L379.0 264.7 L380.0 264.6 L381.0 264.5 L382.0 264.5 L383.0 264.4 L384.0 264.3 L385.0 264.2 L386.0 264.2 L387.0 264.1 L388.0 264.0 L389.0 264.0 L390.0 263.9 L391.0 263.8 L392.0 263.8 L393.0 263.7 L394.0 263.6 L395.0 263.6 L396.0 263.5 L397.0 263.5 L398.0 263.4 L399.0 263.3 L400.0 263.3 L404.0 263.0 L408.0 262.8 L412.0 262.6 L416.0 262.4 L420.0 262.3 L424.0 262.1 L428.0 261.9 L432.0 261.8 L436.0 261.6 L440.0 261.5 L444.0 261.4 L448.0 261.2 L452.0 261.1 L456.0 261.0 L460.0 260.9 L464.0 260.8 L468.0 260.7 L472.0 260.6 L476.0 260.5 L480.0 260.5 L484.0 260.4 L488.0 260.3 L492.0 260.2 L496.0 260.2 L500.0 260.1 L504.0 260.1 L508.0 260.0 L512.0 260.0 L516.0 259.9 L520.0 259.9 L524.0 259.8 L528.0 259.8 L532.0 259.8 L536.0 259.7 L540.0 259.7 L544.0 259.7 L548.0 259.6 L552.0 259.6 L556.0 259.6 L560.0 259.5 L564.0 259.5 L568.0 259.5 L572.0 259.5 L576.0 259.5 L580.0 259.4 L584.0 259.4 L588.0 259.4 L592.0 259.4 L596.0 259.4 L600.0 259.4 L604.0 259.3 L608.0 259.3 L612.0 259.3 L616.0 259.3 L620.0 259.3 L624.0 259.3 L628.0 259.3 L632.0 259.3 L636.0 259.3 L640.0 259.3 L644.0 259.3 L648.0 259.2 L652.0 259.2 L656.0 259.2 L660.0 259.2 L664.0 259.2 L668.0 259.2 L672.0 259.2 L676.0 259.2 L680.0 259.2 L684.0 259.2 L688.0 259.2 L692.0 259.2 L696.0 259.2 L700.0 259.2 L704.0 259.2 L708.0 259.2 L712.0 259.2 L716.0 259.2 L720.0 259.2 L724.0 259.2 L728.0 259.2 L732.0 259.2 L736.0 259.2 L740.0 259.2 L744.0 259.2 L748.0 259.2 L752.0 259.2 L756.0 259.2 L760.0 259.2 L764.0 259.2 L768.0 259.2 L772.0 259.2 L776.0 259.3 L780.0 259.3 L784.0 259.3 L788.0 259.3 L792.0 259.3 L796.0 259.3 L800.0 259.3 L804.0 259.3 L808.0 259.3 L812.0 259.3 L816.0 259.4 L820.0 259.4 L824.0 259.4 L828.0 259.4 L832.0 259.4 L836.0 259.4 L840.0 259.5 L844.0 259.5 L848.0 259.5 L852.0 259.5 L856.0 259.5 L860.0 259.6 L864.0 259.6 L868.0 259.6 L872.0 259.7 L876.0 259.7 L880.0 259.7 L884.0 259.8 L888.0 259.8 L892.0 259.9 L896.0 259.9 L900.0 259.9 L904.0 260.0 L908.0 260.1 L912.0 260.1 L916.0 260.2 L920.0 260.2 L924.0 260.3 L928.0 260.4 L932.0 260.5 L936.0 260.5 L940.0 260.6 L944.0 260.7 L948.0 260.8 L952.0 260.9 L956.0 261.0 L960.0 261.1 L964.0 261.3 L968.0 261.4 L972.0 261.5 L976.0 261.7 L980.0 261.8 L984.0 262.0 L988.0 262.1 L992.0 262.3 L996.0 262.5 L1000.0 262.7 L1004.0 262.9 L1008.0 263.1 L1012.0 263.4 L1016.0 263.6 L1020.0 263.9 L1024.0 264.1 L1028.0 264.4 L1032.0 264.7 L1036.0 265.0 L1040.0 265.3 L1044.0 265.7 L1048.0 266.0 L1052.0 266.4 L1056.0 266.8 L1060.0 267.2 L1064.0 267.7 L1068.0 268.1 L1072.0 268.6 L1076.0 269.1 L1080.0 269.6 L1084.0 270.1 L1088.0 270.7 L1092.0 271.2 L1096.0 271.8 L1100.0 272.4 L1104.0 273.1 L1108.0 273.8 L1112.0 274.4 L1116.0 275.2 L1120.0 275.9 L1124.0 276.7 L1128.0 277.4 L1132.0 278.2 L1136.0 279.1 L1140.0 279.9 L1144.0 280.8 L1148.0 281.7 L1152.0 282.6 L1156.0 283.6 L1160.0 284.6 L1164.0 285.6 L1168.0 286.6 L1172.0 287.6 L1176.0 288.7 L1180.0 289.7 L1184.0 290.9 L1188.0 292.0 L1192.0 293.1 L1196.0 294.3 L1200.0 295.5 L1204.0 296.7 L1208.0 297.9 L1209.4 298.3 L1212.5 300.2 L1214.6 303.5 L1216.2 310.0 L1217.2 321.0 L1218.4 340.0 L1219.4 365.0 L1220.0 395.0 L1220.3 423.8" fill="none" stroke="#1c7676" stroke-width="2.3" stroke-linejoin="round"/></g></svg><svg class="abs" style="left:62px;top:89px" width="16" height="16" viewBox="0 0 16 16"><circle cx="8" cy="8" r="6.1" fill="none" stroke="#3a3a3a" stroke-width="1.6"/><path d="M4.5 8H11.5 M8 4.5V11.5" stroke="#333" stroke-width="2.5"/></svg><svg class="abs" style="left:62px;top:111px" width="16" height="16" viewBox="0 0 16 16"><circle cx="8" cy="8" r="6.1" fill="none" stroke="#3a3a3a" stroke-width="1.6"/><path d="M4.5 8H11.5" stroke="#333" stroke-width="2.5"/></svg><div class="abs" style="left:59px;top:133px;width:62px;height:21px;background:#fff;border:1px solid #8e8e8e"></div><div class="abs" style="left:66px;top:138px;font-size:11px;color:#111">SPL</div><div class="abs" style="left:104px;top:134px;width:16px;height:19px;background:linear-gradient(#f2f2f2,#cdcdcd);border-left:1px solid #8e8e8e"></div><div class="abs" style="left:108px;top:141px;width:0;height:0;border-left:4.5px solid transparent;border-right:4.5px solid transparent;border-top:5px solid #333"></div><div class="abs" style="left:471px;top:119px;font-size:22.3px;letter-spacing:0.95px;font-weight:bold;color:#000;white-space:nowrap">0,3В RMS 3116 4Ом</div><div class="abs" style="left:1025px;top:87px;width:139px;height:70px;border:3px solid #a0a0a0;border-radius:9px;background:rgba(255,255,255,.92)"></div><div class="abs" style="left:1025px;top:96px;width:139px;text-align:center;font-weight:bold;color:#111;white-space:nowrap"><div style="font-size:16.3px;line-height:20px">52,44 dB</div><div style="font-size:9.3px;line-height:11.8px;padding-top:2px">51,7 dB C, 49,9 dB A<br>Peak sample: -40,12 dBFS<br>52,4 dB 22 - 22k UNW</div></div><div class="abs" style="left:1209px;top:87px;width:48px;height:44px;border:2px solid #5e5e5e;border-top-width:3px;border-radius:5px;background:linear-gradient(#b8b8b8,#c6c6c6 30%,#c2c2c2);box-shadow:0 1px 1px rgba(0,0,0,.25)"></div><svg class="abs" style="left:1226px;top:101px" width="14" height="14"><defs><radialGradient id="rg" cx="45%" cy="40%" r="60%"><stop offset="0" stop-color="#ffb090"/><stop offset=".5" stop-color="#ff5a30"/><stop offset="1" stop-color="#c02000"/></radialGradient></defs><circle cx="7" cy="7" r="6" fill="url(#rg)"/></svg><div class="abs" style="left:1209px;top:115px;width:48px;text-align:center;font-size:8px;font-weight:bold;color:#222">12%</div><div class="abs" style="left:59px;top:874px;width:108px;height:34px;border:3px solid #a0a0a0;border-radius:10px;background:rgba(255,255,255,.7)"></div><div class="abs" style="left:70px;top:882px;font-size:16.3px;font-weight:bold;color:#000;white-space:nowrap">2 averages</div><div class="abs" style="left:1165px;top:849px;width:92px;height:19px;border:1px solid #8a8a8a;border-radius:4px;background:linear-gradient(#fafafa,#e2e2e2 70%,#cfcfcf);font-size:11.5px;line-height:17px;text-align:center;color:#111">10 .. 200</div><div class="abs" style="left:1165px;top:871px;width:92px;height:19px;border:1px solid #8a8a8a;border-radius:4px;background:linear-gradient(#fafafa,#e2e2e2 70%,#cfcfcf);font-size:11.5px;line-height:17px;text-align:center;color:#111">20 .. 20 000</div><div class="abs" style="left:1209px;top:892px;width:48px;height:21px;background:rgba(255,255,255,.5)"></div><svg class="abs" style="left:1213px;top:894px" width="16" height="16" viewBox="0 0 16 16"><circle cx="8" cy="8" r="6.1" fill="none" stroke="#3a3a3a" stroke-width="1.6"/><path d="M4.5 8H11.5" stroke="#333" stroke-width="2.5"/></svg><svg class="abs" style="left:1237px;top:894px" width="16" height="16" viewBox="0 0 16 16"><circle cx="8" cy="8" r="6.1" fill="none" stroke="#3a3a3a" stroke-width="1.6"/><path d="M4.5 8H11.5 M8 4.5V11.5" stroke="#333" stroke-width="2.5"/></svg><div class="abs" style="left:57px;top:208px;width:1203px;height:1px;background:#000"></div><div class="abs" style="left:853px;top:85px;width:1px;height:834px;background:#000"></div><div class="abs" style="left:30px;top:201px;width:26px;height:15px;border:1px solid #1010a0;background:#fff;font-size:11px;line-height:13px;color:#2020b0;text-align:center">71,1</div><div class="abs" style="left:838px;top:919px;width:31px;height:15px;border:1px solid #1010a0;background:#fff;font-size:11px;line-height:13px;color:#2020b0;text-align:center">1,17k</div><div class="abs" style="left:57px;top:939px;width:1202px;height:16px;background:#fff;border:1px solid #8a8a8a"></div><div class="abs" style="left:251px;top:939px;width:993px;height:16px;background:linear-gradient(#f4f4f4,#d2d2d2);border:1px solid #8a8a8a"></div><div class="abs" style="left:57px;top:939px;width:16px;height:16px;background:linear-gradient(#f4f4f4,#d2d2d2);border:1px solid #8a8a8a"></div><div class="abs" style="left:63px;top:943px;width:0;height:0;border-top:4px solid transparent;border-bottom:4px solid transparent;border-right:4px solid #333"></div><div class="abs" style="left:1243px;top:939px;width:16px;height:16px;background:linear-gradient(#f4f4f4,#d2d2d2);border:1px solid #8a8a8a"></div><div class="abs" style="left:1249px;top:943px;width:0;height:0;border-top:4px solid transparent;border-bottom:4px solid transparent;border-left:4px solid #333"></div><div class="abs" style="left:131px;top:958px;width:1054px;height:20px;background:#fff;box-shadow:0 0 2px 1px #8a8a8a"></div><svg class="abs" style="left:135px;top:961px" width="14" height="14"><defs><linearGradient id="cb135" x1="0" y1="0" x2="0" y2="1"><stop offset="0" stop-color="#f8f8f8"/><stop offset="1" stop-color="#d0d0d0"/></linearGradient></defs><rect x="0.5" y="0.5" width="13" height="13" rx="2" fill="url(#cb135)" stroke="#666"/><path d="M3 7 L6 11 L11 2" stroke="#000" stroke-width="2" fill="none"/></svg><svg class="abs" style="left:483px;top:961px" width="14" height="14"><defs><linearGradient id="cb483" x1="0" y1="0" x2="0" y2="1"><stop offset="0" stop-color="#f8f8f8"/><stop offset="1" stop-color="#d0d0d0"/></linearGradient></defs><rect x="0.5" y="0.5" width="13" height="13" rx="2" fill="url(#cb483)" stroke="#666"/><path d="M3 7 L6 11 L11 2" stroke="#000" stroke-width="2" fill="none"/></svg><svg class="abs" style="left:831px;top:961px" width="14" height="14"><defs><linearGradient id="cb831" x1="0" y1="0" x2="0" y2="1"><stop offset="0" stop-color="#f8f8f8"/><stop offset="1" stop-color="#d0d0d0"/></linearGradient></defs><rect x="0.5" y="0.5" width="13" height="13" rx="2" fill="url(#cb831)" stroke="#666"/></svg><div class="abs" style="left:155px;top:962px;font-size:11px;color:#23858e">6B</div><div class="abs" style="left:320px;top:968px;width:49px;height:2px;background:#1a7f80"></div><div class="abs" style="left:409px;top:962px;font-size:11px;color:#23858e">62,6 dB</div><div class="abs" style="left:503px;top:962px;font-size:11px;color:#111">Spectrum</div><div class="abs" style="left:668px;top:968px;width:49px;height:2px;background:#000"></div><div class="abs" style="left:753px;top:962px;font-size:11px;color:#111">-30,3 dB</div><div class="abs" style="left:851px;top:962px;font-size:11px;color:#9a1a2a">Peak</div><div class="abs" style="left:1101px;top:962px;font-size:11px;color:#9a1a2a">-30,2 dB</div><div class="abs" style="left:0;top:984px;width:1280px;height:3px;background:#2f7d55"></div><div class="abs" style="left:0;top:984px;width:1px;height:40px;background:#2f7d55"></div></body></html>
